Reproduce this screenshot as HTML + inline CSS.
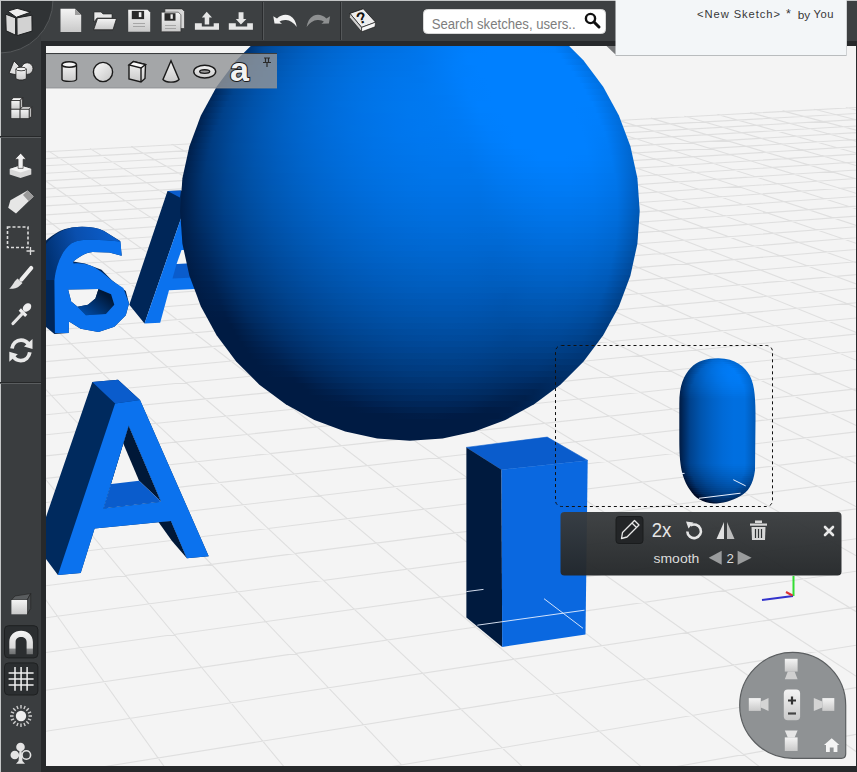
<!DOCTYPE html>
<html><head><meta charset="utf-8">
<style>
*{margin:0;padding:0;box-sizing:border-box}
html,body{width:857px;height:772px;overflow:hidden;background:#27292b;font-family:"Liberation Sans",sans-serif}
svg{position:absolute;left:0;top:0;overflow:visible}
</style></head><body>
<svg width="857" height="772" viewBox="0 0 857 772">
<defs>
<clipPath id="cv"><rect x="46" y="46" width="810" height="720"/></clipPath>
<radialGradient id="sph" gradientUnits="userSpaceOnUse" cx="560" cy="110" r="420" fx="570" fy="100">
<stop offset="0" stop-color="#0a86ff"/>
<stop offset="0.3" stop-color="#0070e6"/>
<stop offset="0.6" stop-color="#0050a8"/>
<stop offset="0.85" stop-color="#002a60"/>
<stop offset="1" stop-color="#00142e"/>
</radialGradient>
<linearGradient id="ico" x1="0" y1="0" x2="0" y2="1">
<stop offset="0" stop-color="#fafafa"/><stop offset="1" stop-color="#cfcfcf"/>
</linearGradient>
</defs>
<!-- frame -->
<rect x="0" y="0" width="857" height="772" fill="#27292b"/>
<rect x="0" y="0" width="857" height="41" fill="#3d4042"/>
<rect x="0" y="0" width="41" height="772" fill="#3a3d3f"/>
<circle cx="0" cy="0" r="53" fill="#303335" stroke="#55585a" stroke-width="1"/>
<rect x="0" y="0" width="857" height="1" fill="#c4c6c7"/>
<rect x="0" y="0" width="1" height="772" fill="#c4c6c7"/>
<rect x="0" y="136" width="41" height="1" fill="#262829"/>
<rect x="0" y="137" width="41" height="1" fill="#5a5d5f"/>
<rect x="0" y="382" width="41" height="1" fill="#262829"/>
<rect x="0" y="383" width="41" height="1" fill="#5a5d5f"/>
<rect x="262" y="2" width="1" height="38" fill="#2a2c2e"/><rect x="263" y="2" width="1" height="38" fill="#55585a"/>
<rect x="340" y="2" width="1" height="38" fill="#2a2c2e"/><rect x="341" y="2" width="1" height="38" fill="#55585a"/>

<!-- canvas -->
<rect x="46" y="46" width="810" height="720" fill="#f4f4f4"/>
<g clip-path="url(#cv)">
<path d="M-1049.0 210.6L-3079.9 2030.2M-990.2 207.4L-2708.2 1939.1M-932.5 204.3L-2366.1 1855.2M-875.7 201.2L-2050.2 1777.8M-819.8 198.2L-1757.6 1706.0M-764.8 195.2L-1485.8 1639.4M-710.8 192.2L-1232.7 1577.4M-657.6 189.3L-996.4 1519.4M-605.2 186.5L-775.3 1465.2M-553.7 183.7L-568.0 1414.4M-503.0 180.9L-373.2 1366.7M-453.1 178.2L-189.8 1321.7M-404.0 175.5L-16.9 1279.3M-355.6 172.9L146.5 1239.3M-308.0 170.3L301.0 1201.4M-261.1 167.7L447.5 1165.5M-214.9 165.2L586.4 1131.4M-169.3 162.7L718.4 1099.1M-124.5 160.3L844.0 1068.3M-80.3 157.9L963.7 1038.9M-36.8 155.5L1077.8 1011.0M6.1 153.2L1186.7 984.3M48.4 150.9L1290.7 958.8M90.1 148.6L1390.3 934.4M131.2 146.4L1485.7 911.0M171.7 144.2L1577.0 888.6M211.7 142.0L1664.7 867.1M251.1 139.9L1748.8 846.5M289.9 137.7L1829.7 826.6M328.2 135.7L1907.5 807.6M366.0 133.6L1982.3 789.2M403.3 131.6L2054.4 771.6M440.1 129.6L2123.8 754.5M476.4 127.6L2190.8 738.1M512.2 125.6L2255.4 722.3M547.5 123.7L2317.8 707.0M582.4 121.8L2378.1 692.2M616.8 119.9L2436.4 677.9M650.8 118.1L2492.8 664.1M684.4 116.3L2547.3 650.7M717.5 114.5L2600.2 637.8M750.2 112.7L2651.4 625.2M782.5 110.9L2701.0 613.1M814.3 109.2L2749.1 601.3M845.8 107.5L2795.8 589.8M876.9 105.8L2841.1 578.7M907.6 104.1L2885.1 567.9M938.0 102.5L2927.8 557.4M967.9 100.8L2969.4 547.3M997.6 99.2L3009.8 537.4M1026.8 97.6L3049.0 527.7M1055.7 96.0L3087.3 518.4M1084.3 94.5L3124.5 509.2M1112.5 93.0L3160.7 500.4M1140.4 91.4L3196.0 491.7M1168.0 89.9L3230.4 483.3M1195.3 88.5L3263.9 475.1M1222.2 87.0L3296.6 467.1M1248.8 85.5L3328.4 459.2M1275.2 84.1L3359.5 451.6M1301.2 82.7L3389.9 444.2M-1050.0 211.5L1303.5 83.1M-1059.7 220.2L1327.2 87.2M-1069.9 229.3L1351.5 91.4M-1080.4 238.8L1376.4 95.7M-1091.4 248.6L1401.9 100.1M-1102.9 258.9L1428.2 104.7M-1114.8 269.6L1455.2 109.3M-1127.3 280.8L1482.9 114.1M-1140.3 292.4L1511.4 119.1M-1154.0 304.7L1540.7 124.1M-1168.2 317.5L1570.9 129.4M-1183.2 330.9L1601.9 134.7M-1198.9 345.0L1633.9 140.3M-1215.4 359.7L1666.8 146.0M-1232.8 375.3L1700.7 151.8M-1251.1 391.7L1735.7 157.9M-1270.4 409.0L1771.8 164.1M-1290.8 427.3L1809.1 170.6M-1312.4 446.6L1847.5 177.2M-1335.3 467.1L1887.3 184.1M-1359.6 488.9L1928.4 191.2M-1385.4 512.1L1970.9 198.6M-1413.0 536.7L2014.9 206.2M-1442.4 563.1L2060.4 214.1M-1473.9 591.3L2107.6 222.3M-1507.7 621.6L2156.5 230.7M-1544.1 654.2L2207.3 239.5M-1583.3 689.3L2260.0 248.6M-1625.8 727.4L2314.8 258.1M-1671.9 768.7L2371.7 268.0M-1722.1 813.7L2431.0 278.2M-1777.0 862.8L2492.7 288.9M-1837.3 916.9L2557.0 300.0M-1903.8 976.5L2624.1 311.6M-1977.5 1042.6L2694.1 323.8M-2059.8 1116.3L2767.4 336.4M-2152.1 1199.0L2844.0 349.7M-2256.4 1292.4L2924.2 363.6M-2375.3 1398.9L3008.3 378.1M-2511.9 1521.3L3096.6 393.4M-2670.6 1663.5L3189.4 409.5M-2857.2 1830.7L3287.0 426.4M-3079.9 2030.2L3389.9 444.2" stroke="#dfdfdf" stroke-width="1.1" fill="none"/>
<defs>
<linearGradient id="capg" gradientUnits="userSpaceOnUse" x1="680" y1="430" x2="756" y2="410">
<stop offset="0" stop-color="#00205a"/><stop offset="0.35" stop-color="#0050b8"/><stop offset="0.8" stop-color="#0a78ee"/><stop offset="1" stop-color="#0a70e0"/>
</linearGradient>
<radialGradient id="capr" gradientUnits="userSpaceOnUse" cx="735" cy="385" r="140">
<stop offset="0" stop-color="#000" stop-opacity="0"/><stop offset="0.6" stop-color="#000" stop-opacity="0.1"/><stop offset="1" stop-color="#000" stop-opacity="0.55"/>
</radialGradient>
<linearGradient id="bowlg" gradientUnits="userSpaceOnUse" x1="100" y1="290" x2="80" y2="315">
<stop offset="0" stop-color="#001838"/><stop offset="1" stop-color="#0050b0"/>
</linearGradient>
</defs>
<!-- б letter -->
<g>
<linearGradient id="bside" gradientUnits="userSpaceOnUse" x1="46" y1="250" x2="110" y2="232"><stop offset="0" stop-color="#003274"/><stop offset="0.5" stop-color="#0a4fae"/><stop offset="1" stop-color="#0a5cc8"/></linearGradient>
<path d="M40 246 C50 236 60 229 72 227.4 C84 226 96 227 104 231 L120.2 241 L121.7 255.7 L109.3 252.6 L92.6 251.9 C86 252.5 80 256 73.2 261.6 L84.9 263.5 L101.5 269.7 L111.6 280 L125.8 291 L129 303.6 L125.8 315.2 L114.3 326.7 L98.5 332 L80.7 328.8 L69 321.5 L68.6 333 L54.4 334 L40 322 Z" fill="#002658"/>
<path d="M46 244 C52 236 60 230 72 227.4 C84 226 96 227 104 231 L120.5 241.5 L106 240.2 L92 239.8 C84 239.8 78 240 71.6 243.3 C62 250 56 265 54.4 280 L46 280 Z" fill="url(#bside)"/>
<path d="M68.1 289.4 L98.5 288.9 L95.4 298.4 L88 304.7 L77.5 306.8 L71.2 301.5 Z" fill="#f4f4f4"/>
<path d="M98.5 288.9 L111.1 294.2 L114.3 304.7 L105.9 314.1 L85.9 315.2 L77.5 306.8 L88 304.7 L95.4 298.4 Z" fill="url(#bowlg)"/>
<path fill-rule="evenodd" fill="#0b72ee" d="M54.4 280 C56 265 62 250 71.6 243.3 C78 240 84 239.8 92 239.8 L106 240.2 L120.5 241.5 L121.7 255.7 L109.3 252.6 L92.6 251.9 C86 252.5 80 256 73.2 261.6 L73.5 263.5 C84 262.5 92 265 101.7 272.1 L113.2 281.6 L123.3 288 L129 303.6 L125.8 315.2 L114.3 326.7 L98.5 332 L80.7 328.8 L69.1 321.5 L68.6 333 L54.9 333 Z
M68.1 289.4 L98.5 288.9 L111.1 294.2 L114.3 304.7 L105.9 314.1 L85.9 315.2 L77.5 306.8 L71.2 301.5 Z"/>
</g>
<!-- small A -->
<g>
<path d="M167.5 190.9 L186 190.4 L186 214 L182.5 214 L144.5 323.4 L129.3 304.8 Z" fill="#002658"/>
<path d="M167.5 190.9 L181 190.4 L179.9 197.6 Z" fill="#0a5ccc"/>
<path d="M182.5 214 L205 214 L205 288.5 L169 290.2 L160.2 322.8 L144.5 323.4 Z" fill="#0b72ee"/>
<path d="M176.6 264 L181.5 250 L200 250 L200 264 Z" fill="#f4f4f4"/>
<path d="M176.6 264 L205 262.5 L205 277 L172.5 278.5 Z" fill="#0a5ccc"/>
</g>
<!-- big A -->
<g>
<path d="M92.3 382.1 L118 379.7 L140 399.9 L208.7 556.2 L186.9 558.2 L171 521 L94.6 528.5 L80.7 573.1 L57.9 575 L40 551 L40 534.4 Z" fill="#002a5e"/>
<clipPath id="ahole"><path d="M128.7 425.6 L161.1 501.7 L103.5 508.6 Z"/></clipPath>
<g clip-path="url(#ahole)">
<path d="M128.7 425.6 L161.1 501.7 L103.5 508.6 Z" fill="#f4f4f4"/>
<path d="M106.7 404.6 L128.7 425.6 L161.1 501.7 L139.1 480.7 Z" fill="#001838"/>
<path d="M81.5 487.6 L139.1 480.7 L161.1 501.7 L103.5 508.6 Z" fill="#0a5ccc"/>
</g>
<path d="M171 521 L186.9 558.2 L172 541 L158.1 521.5 Z" fill="#001838"/>
<path d="M92.3 382.1 L118 379.7 L140 399.9 L115.1 403.5 Z" fill="#0a5ccc"/>
<path fill-rule="evenodd" fill="#0b72ee" d="M115.1 403.5 L140 399.9 L208.7 556.2 L186.9 558.2 L171 521 L94.6 528.5 L80.7 573.1 L57.9 575 Z M128.7 425.6 L161.1 501.7 L103.5 508.6 Z"/>
</g>
<!-- sphere -->
<defs>
<linearGradient id="s0" gradientUnits="userSpaceOnUse" x1="356.3" y1="0" x2="462.7" y2="0"><stop offset="0.000" stop-color="#004591"/><stop offset="0.200" stop-color="#0050a6"/><stop offset="0.400" stop-color="#005ab9"/><stop offset="0.600" stop-color="#0060c4"/><stop offset="0.800" stop-color="#0061c5"/><stop offset="1.000" stop-color="#0061c5"/></linearGradient>
<linearGradient id="s1" gradientUnits="userSpaceOnUse" x1="335.2" y1="0" x2="483.8" y2="0"><stop offset="0.000" stop-color="#003e84"/><stop offset="0.143" stop-color="#004ea2"/><stop offset="0.286" stop-color="#0059b7"/><stop offset="0.429" stop-color="#0061c6"/><stop offset="0.571" stop-color="#0067d0"/><stop offset="0.714" stop-color="#006ad6"/><stop offset="0.857" stop-color="#006ad6"/><stop offset="1.000" stop-color="#0065cd"/></linearGradient>
<linearGradient id="s2" gradientUnits="userSpaceOnUse" x1="319.3" y1="0" x2="499.7" y2="0"><stop offset="0.000" stop-color="#003b7e"/><stop offset="0.125" stop-color="#004da0"/><stop offset="0.250" stop-color="#0058b5"/><stop offset="0.375" stop-color="#0061c6"/><stop offset="0.500" stop-color="#0068d2"/><stop offset="0.625" stop-color="#006ddc"/><stop offset="0.750" stop-color="#0070e1"/><stop offset="0.875" stop-color="#006fe0"/><stop offset="1.000" stop-color="#0068d2"/></linearGradient>
<linearGradient id="s3" gradientUnits="userSpaceOnUse" x1="306.2" y1="0" x2="512.8" y2="0"><stop offset="0.000" stop-color="#00397b"/><stop offset="0.111" stop-color="#004da1"/><stop offset="0.222" stop-color="#0058b4"/><stop offset="0.333" stop-color="#0060c3"/><stop offset="0.444" stop-color="#0068d2"/><stop offset="0.556" stop-color="#006edd"/><stop offset="0.667" stop-color="#0072e5"/><stop offset="0.778" stop-color="#0074e9"/><stop offset="0.889" stop-color="#0073e7"/><stop offset="1.000" stop-color="#0069d5"/></linearGradient>
<linearGradient id="s4" gradientUnits="userSpaceOnUse" x1="294.9" y1="0" x2="524.1" y2="0"><stop offset="0.000" stop-color="#003777"/><stop offset="0.100" stop-color="#004da1"/><stop offset="0.200" stop-color="#0058b5"/><stop offset="0.300" stop-color="#005fc2"/><stop offset="0.400" stop-color="#0066cf"/><stop offset="0.500" stop-color="#006ddb"/><stop offset="0.600" stop-color="#0072e5"/><stop offset="0.700" stop-color="#0076ec"/><stop offset="0.800" stop-color="#0078ef"/><stop offset="0.900" stop-color="#0076ec"/><stop offset="1.000" stop-color="#006bd8"/></linearGradient>
<linearGradient id="s5" gradientUnits="userSpaceOnUse" x1="285.0" y1="0" x2="534.0" y2="0"><stop offset="0.000" stop-color="#003574"/><stop offset="0.091" stop-color="#004da0"/><stop offset="0.182" stop-color="#0058b5"/><stop offset="0.273" stop-color="#0060c3"/><stop offset="0.364" stop-color="#0065cc"/><stop offset="0.455" stop-color="#006bd9"/><stop offset="0.545" stop-color="#0071e4"/><stop offset="0.636" stop-color="#0076ec"/><stop offset="0.727" stop-color="#0079f2"/><stop offset="0.818" stop-color="#007af4"/><stop offset="0.909" stop-color="#0078f0"/><stop offset="1.000" stop-color="#006cda"/></linearGradient>
<linearGradient id="s6" gradientUnits="userSpaceOnUse" x1="276.0" y1="0" x2="543.0" y2="0"><stop offset="0.000" stop-color="#003371"/><stop offset="0.083" stop-color="#004c9f"/><stop offset="0.167" stop-color="#0058b5"/><stop offset="0.250" stop-color="#0060c3"/><stop offset="0.333" stop-color="#0065cd"/><stop offset="0.417" stop-color="#0069d5"/><stop offset="0.500" stop-color="#0070e1"/><stop offset="0.583" stop-color="#0075eb"/><stop offset="0.667" stop-color="#0079f2"/><stop offset="0.750" stop-color="#007cf7"/><stop offset="0.833" stop-color="#007df9"/><stop offset="0.917" stop-color="#007af4"/><stop offset="1.000" stop-color="#006ddc"/></linearGradient>
<linearGradient id="s7" gradientUnits="userSpaceOnUse" x1="267.9" y1="0" x2="551.1" y2="0"><stop offset="0.000" stop-color="#00326e"/><stop offset="0.083" stop-color="#004c9f"/><stop offset="0.167" stop-color="#0059b6"/><stop offset="0.250" stop-color="#0061c6"/><stop offset="0.333" stop-color="#0067d0"/><stop offset="0.417" stop-color="#006bd7"/><stop offset="0.500" stop-color="#0071e3"/><stop offset="0.583" stop-color="#0076ed"/><stop offset="0.667" stop-color="#007bf5"/><stop offset="0.750" stop-color="#007efa"/><stop offset="0.833" stop-color="#007ffc"/><stop offset="0.917" stop-color="#007cf7"/><stop offset="1.000" stop-color="#006edd"/></linearGradient>
<linearGradient id="s8" gradientUnits="userSpaceOnUse" x1="260.4" y1="0" x2="558.6" y2="0"><stop offset="0.000" stop-color="#00306b"/><stop offset="0.077" stop-color="#004b9d"/><stop offset="0.154" stop-color="#0058b5"/><stop offset="0.231" stop-color="#0061c5"/><stop offset="0.308" stop-color="#0067d0"/><stop offset="0.385" stop-color="#006bd8"/><stop offset="0.462" stop-color="#006fdf"/><stop offset="0.538" stop-color="#0075ea"/><stop offset="0.615" stop-color="#007af3"/><stop offset="0.692" stop-color="#007dfa"/><stop offset="0.769" stop-color="#0080fe"/><stop offset="0.846" stop-color="#0080ff"/><stop offset="0.923" stop-color="#007df9"/><stop offset="1.000" stop-color="#006ede"/></linearGradient>
<linearGradient id="s9" gradientUnits="userSpaceOnUse" x1="253.6" y1="0" x2="565.4" y2="0"><stop offset="0.000" stop-color="#002f68"/><stop offset="0.077" stop-color="#004b9e"/><stop offset="0.154" stop-color="#0059b6"/><stop offset="0.231" stop-color="#0061c6"/><stop offset="0.308" stop-color="#0068d2"/><stop offset="0.385" stop-color="#006cda"/><stop offset="0.462" stop-color="#006fe0"/><stop offset="0.538" stop-color="#0075eb"/><stop offset="0.615" stop-color="#007bf5"/><stop offset="0.692" stop-color="#007efc"/><stop offset="0.769" stop-color="#0080ff"/><stop offset="0.846" stop-color="#0080ff"/><stop offset="0.923" stop-color="#007efc"/><stop offset="1.000" stop-color="#006ede"/></linearGradient>
<linearGradient id="s10" gradientUnits="userSpaceOnUse" x1="247.2" y1="0" x2="571.8" y2="0"><stop offset="0.000" stop-color="#002d66"/><stop offset="0.071" stop-color="#004a9b"/><stop offset="0.143" stop-color="#0057b4"/><stop offset="0.214" stop-color="#0060c4"/><stop offset="0.286" stop-color="#0067d1"/><stop offset="0.357" stop-color="#006cda"/><stop offset="0.429" stop-color="#0070e0"/><stop offset="0.500" stop-color="#0073e6"/><stop offset="0.571" stop-color="#0078f1"/><stop offset="0.643" stop-color="#007df9"/><stop offset="0.714" stop-color="#0080ff"/><stop offset="0.786" stop-color="#0080ff"/><stop offset="0.857" stop-color="#0080ff"/><stop offset="0.929" stop-color="#007ffd"/><stop offset="1.000" stop-color="#006fdf"/></linearGradient>
<linearGradient id="s11" gradientUnits="userSpaceOnUse" x1="241.4" y1="0" x2="577.6" y2="0"><stop offset="0.000" stop-color="#002c63"/><stop offset="0.067" stop-color="#004999"/><stop offset="0.133" stop-color="#0056b1"/><stop offset="0.200" stop-color="#005fc3"/><stop offset="0.267" stop-color="#0066cf"/><stop offset="0.333" stop-color="#006bd9"/><stop offset="0.400" stop-color="#006fe0"/><stop offset="0.467" stop-color="#0072e5"/><stop offset="0.533" stop-color="#0076ec"/><stop offset="0.600" stop-color="#007bf5"/><stop offset="0.667" stop-color="#007ffd"/><stop offset="0.733" stop-color="#0080ff"/><stop offset="0.800" stop-color="#0080ff"/><stop offset="0.867" stop-color="#0080ff"/><stop offset="0.933" stop-color="#007ffd"/><stop offset="1.000" stop-color="#006fdf"/></linearGradient>
<linearGradient id="s12" gradientUnits="userSpaceOnUse" x1="235.9" y1="0" x2="583.1" y2="0"><stop offset="0.000" stop-color="#002a60"/><stop offset="0.067" stop-color="#004998"/><stop offset="0.133" stop-color="#0056b2"/><stop offset="0.200" stop-color="#0060c3"/><stop offset="0.267" stop-color="#0067d0"/><stop offset="0.333" stop-color="#006cda"/><stop offset="0.400" stop-color="#0070e2"/><stop offset="0.467" stop-color="#0073e7"/><stop offset="0.533" stop-color="#0076ed"/><stop offset="0.600" stop-color="#007bf6"/><stop offset="0.667" stop-color="#0080fe"/><stop offset="0.733" stop-color="#0080ff"/><stop offset="0.800" stop-color="#0080ff"/><stop offset="0.867" stop-color="#0080ff"/><stop offset="0.933" stop-color="#0080ff"/><stop offset="1.000" stop-color="#006fdf"/></linearGradient>
<linearGradient id="s13" gradientUnits="userSpaceOnUse" x1="230.8" y1="0" x2="588.2" y2="0"><stop offset="0.000" stop-color="#00295e"/><stop offset="0.067" stop-color="#004898"/><stop offset="0.133" stop-color="#0056b2"/><stop offset="0.200" stop-color="#0060c4"/><stop offset="0.267" stop-color="#0067d1"/><stop offset="0.333" stop-color="#006ddb"/><stop offset="0.400" stop-color="#0071e3"/><stop offset="0.467" stop-color="#0074e8"/><stop offset="0.533" stop-color="#0076ed"/><stop offset="0.600" stop-color="#007cf7"/><stop offset="0.667" stop-color="#0080ff"/><stop offset="0.733" stop-color="#0080ff"/><stop offset="0.800" stop-color="#0080ff"/><stop offset="0.867" stop-color="#0080ff"/><stop offset="0.933" stop-color="#0080ff"/><stop offset="1.000" stop-color="#006ede"/></linearGradient>
<linearGradient id="s14" gradientUnits="userSpaceOnUse" x1="226.0" y1="0" x2="593.0" y2="0"><stop offset="0.000" stop-color="#00275b"/><stop offset="0.062" stop-color="#004795"/><stop offset="0.125" stop-color="#0055af"/><stop offset="0.188" stop-color="#005fc1"/><stop offset="0.250" stop-color="#0066cf"/><stop offset="0.312" stop-color="#006cd9"/><stop offset="0.375" stop-color="#0070e1"/><stop offset="0.438" stop-color="#0073e7"/><stop offset="0.500" stop-color="#0075eb"/><stop offset="0.562" stop-color="#0079f2"/><stop offset="0.625" stop-color="#007efb"/><stop offset="0.688" stop-color="#0080ff"/><stop offset="0.750" stop-color="#0080ff"/><stop offset="0.812" stop-color="#0080ff"/><stop offset="0.875" stop-color="#0080ff"/><stop offset="0.938" stop-color="#0080ff"/><stop offset="1.000" stop-color="#006ede"/></linearGradient>
<linearGradient id="s15" gradientUnits="userSpaceOnUse" x1="221.6" y1="0" x2="597.4" y2="0"><stop offset="0.000" stop-color="#002658"/><stop offset="0.062" stop-color="#004694"/><stop offset="0.125" stop-color="#0055af"/><stop offset="0.188" stop-color="#005fc1"/><stop offset="0.250" stop-color="#0066cf"/><stop offset="0.312" stop-color="#006cda"/><stop offset="0.375" stop-color="#0071e2"/><stop offset="0.438" stop-color="#0074e8"/><stop offset="0.500" stop-color="#0076ec"/><stop offset="0.562" stop-color="#0079f2"/><stop offset="0.625" stop-color="#007efb"/><stop offset="0.688" stop-color="#0080ff"/><stop offset="0.750" stop-color="#0080ff"/><stop offset="0.812" stop-color="#0080ff"/><stop offset="0.875" stop-color="#0080ff"/><stop offset="0.938" stop-color="#0080ff"/><stop offset="1.000" stop-color="#006edd"/></linearGradient>
<linearGradient id="s16" gradientUnits="userSpaceOnUse" x1="217.4" y1="0" x2="601.6" y2="0"><stop offset="0.000" stop-color="#002556"/><stop offset="0.059" stop-color="#004591"/><stop offset="0.118" stop-color="#0053ac"/><stop offset="0.176" stop-color="#005dbe"/><stop offset="0.235" stop-color="#0065cd"/><stop offset="0.294" stop-color="#006bd8"/><stop offset="0.353" stop-color="#0070e0"/><stop offset="0.412" stop-color="#0073e7"/><stop offset="0.471" stop-color="#0076ec"/><stop offset="0.529" stop-color="#0077ee"/><stop offset="0.588" stop-color="#007bf6"/><stop offset="0.647" stop-color="#007ffe"/><stop offset="0.706" stop-color="#0080ff"/><stop offset="0.765" stop-color="#0080ff"/><stop offset="0.824" stop-color="#0080ff"/><stop offset="0.882" stop-color="#0080ff"/><stop offset="0.941" stop-color="#0080ff"/><stop offset="1.000" stop-color="#006edd"/></linearGradient>
<linearGradient id="s17" gradientUnits="userSpaceOnUse" x1="213.5" y1="0" x2="605.5" y2="0"><stop offset="0.000" stop-color="#002354"/><stop offset="0.059" stop-color="#004490"/><stop offset="0.118" stop-color="#0053ab"/><stop offset="0.176" stop-color="#005dbe"/><stop offset="0.235" stop-color="#0065cd"/><stop offset="0.294" stop-color="#006bd8"/><stop offset="0.353" stop-color="#0070e1"/><stop offset="0.412" stop-color="#0073e8"/><stop offset="0.471" stop-color="#0076ec"/><stop offset="0.529" stop-color="#0078ef"/><stop offset="0.588" stop-color="#007bf5"/><stop offset="0.647" stop-color="#007ffe"/><stop offset="0.706" stop-color="#0080ff"/><stop offset="0.765" stop-color="#0080ff"/><stop offset="0.824" stop-color="#0080ff"/><stop offset="0.882" stop-color="#0080ff"/><stop offset="0.941" stop-color="#0080ff"/><stop offset="1.000" stop-color="#006ddc"/></linearGradient>
<linearGradient id="s18" gradientUnits="userSpaceOnUse" x1="209.9" y1="0" x2="609.1" y2="0"><stop offset="0.000" stop-color="#002251"/><stop offset="0.059" stop-color="#00448f"/><stop offset="0.118" stop-color="#0052ab"/><stop offset="0.176" stop-color="#005dbe"/><stop offset="0.235" stop-color="#0065cd"/><stop offset="0.294" stop-color="#006bd8"/><stop offset="0.353" stop-color="#0070e1"/><stop offset="0.412" stop-color="#0074e8"/><stop offset="0.471" stop-color="#0076ed"/><stop offset="0.529" stop-color="#0078f0"/><stop offset="0.588" stop-color="#007bf5"/><stop offset="0.647" stop-color="#007ffd"/><stop offset="0.706" stop-color="#0080ff"/><stop offset="0.765" stop-color="#0080ff"/><stop offset="0.824" stop-color="#0080ff"/><stop offset="0.882" stop-color="#0080ff"/><stop offset="0.941" stop-color="#0080ff"/><stop offset="1.000" stop-color="#006ddb"/></linearGradient>
<linearGradient id="s19" gradientUnits="userSpaceOnUse" x1="206.5" y1="0" x2="612.5" y2="0"><stop offset="0.000" stop-color="#00214f"/><stop offset="0.059" stop-color="#00438e"/><stop offset="0.118" stop-color="#0052aa"/><stop offset="0.176" stop-color="#005dbd"/><stop offset="0.235" stop-color="#0065cc"/><stop offset="0.294" stop-color="#006bd8"/><stop offset="0.353" stop-color="#0070e1"/><stop offset="0.412" stop-color="#0074e8"/><stop offset="0.471" stop-color="#0076ed"/><stop offset="0.529" stop-color="#0078f0"/><stop offset="0.588" stop-color="#007af4"/><stop offset="0.647" stop-color="#007ffd"/><stop offset="0.706" stop-color="#0080ff"/><stop offset="0.765" stop-color="#0080ff"/><stop offset="0.824" stop-color="#0080ff"/><stop offset="0.882" stop-color="#0080ff"/><stop offset="0.941" stop-color="#0080ff"/><stop offset="1.000" stop-color="#006cda"/></linearGradient>
<linearGradient id="s20" gradientUnits="userSpaceOnUse" x1="203.4" y1="0" x2="615.6" y2="0"><stop offset="0.000" stop-color="#00204c"/><stop offset="0.056" stop-color="#00418b"/><stop offset="0.111" stop-color="#0050a6"/><stop offset="0.167" stop-color="#005bba"/><stop offset="0.222" stop-color="#0063c9"/><stop offset="0.278" stop-color="#0069d5"/><stop offset="0.333" stop-color="#006fdf"/><stop offset="0.389" stop-color="#0073e6"/><stop offset="0.444" stop-color="#0076eb"/><stop offset="0.500" stop-color="#0078ef"/><stop offset="0.556" stop-color="#0079f1"/><stop offset="0.611" stop-color="#007cf7"/><stop offset="0.667" stop-color="#0080ff"/><stop offset="0.722" stop-color="#0080ff"/><stop offset="0.778" stop-color="#0080ff"/><stop offset="0.833" stop-color="#0080ff"/><stop offset="0.889" stop-color="#0080ff"/><stop offset="0.944" stop-color="#0080fe"/><stop offset="1.000" stop-color="#006bd9"/></linearGradient>
<linearGradient id="s21" gradientUnits="userSpaceOnUse" x1="200.4" y1="0" x2="618.6" y2="0"><stop offset="0.000" stop-color="#001e4a"/><stop offset="0.056" stop-color="#00418a"/><stop offset="0.111" stop-color="#0050a6"/><stop offset="0.167" stop-color="#005ab9"/><stop offset="0.222" stop-color="#0063c9"/><stop offset="0.278" stop-color="#0069d5"/><stop offset="0.333" stop-color="#006ede"/><stop offset="0.389" stop-color="#0073e6"/><stop offset="0.444" stop-color="#0076eb"/><stop offset="0.500" stop-color="#0078ef"/><stop offset="0.556" stop-color="#0079f1"/><stop offset="0.611" stop-color="#007bf6"/><stop offset="0.667" stop-color="#0080fe"/><stop offset="0.722" stop-color="#0080ff"/><stop offset="0.778" stop-color="#0080ff"/><stop offset="0.833" stop-color="#0080ff"/><stop offset="0.889" stop-color="#0080ff"/><stop offset="0.944" stop-color="#007ffd"/><stop offset="1.000" stop-color="#006bd7"/></linearGradient>
<linearGradient id="s22" gradientUnits="userSpaceOnUse" x1="197.7" y1="0" x2="621.3" y2="0"><stop offset="0.000" stop-color="#001d48"/><stop offset="0.056" stop-color="#004088"/><stop offset="0.111" stop-color="#004fa5"/><stop offset="0.167" stop-color="#005ab9"/><stop offset="0.222" stop-color="#0062c8"/><stop offset="0.278" stop-color="#0069d4"/><stop offset="0.333" stop-color="#006ede"/><stop offset="0.389" stop-color="#0072e6"/><stop offset="0.444" stop-color="#0075eb"/><stop offset="0.500" stop-color="#0078ef"/><stop offset="0.556" stop-color="#0079f1"/><stop offset="0.611" stop-color="#007bf6"/><stop offset="0.667" stop-color="#007ffd"/><stop offset="0.722" stop-color="#0080ff"/><stop offset="0.778" stop-color="#0080ff"/><stop offset="0.833" stop-color="#0080ff"/><stop offset="0.889" stop-color="#0080ff"/><stop offset="0.944" stop-color="#007ffd"/><stop offset="1.000" stop-color="#006ad6"/></linearGradient>
<linearGradient id="s23" gradientUnits="userSpaceOnUse" x1="195.2" y1="0" x2="623.8" y2="0"><stop offset="0.000" stop-color="#001c45"/><stop offset="0.056" stop-color="#003f87"/><stop offset="0.111" stop-color="#004fa4"/><stop offset="0.167" stop-color="#005ab8"/><stop offset="0.222" stop-color="#0062c7"/><stop offset="0.278" stop-color="#0069d4"/><stop offset="0.333" stop-color="#006ede"/><stop offset="0.389" stop-color="#0072e5"/><stop offset="0.444" stop-color="#0075eb"/><stop offset="0.500" stop-color="#0077ef"/><stop offset="0.556" stop-color="#0079f1"/><stop offset="0.611" stop-color="#007af4"/><stop offset="0.667" stop-color="#007ffc"/><stop offset="0.722" stop-color="#0080ff"/><stop offset="0.778" stop-color="#0080ff"/><stop offset="0.833" stop-color="#0080ff"/><stop offset="0.889" stop-color="#0080ff"/><stop offset="0.944" stop-color="#007efc"/><stop offset="1.000" stop-color="#0069d4"/></linearGradient>
<linearGradient id="s24" gradientUnits="userSpaceOnUse" x1="192.9" y1="0" x2="626.1" y2="0"><stop offset="0.000" stop-color="#001b43"/><stop offset="0.053" stop-color="#003d84"/><stop offset="0.105" stop-color="#004da0"/><stop offset="0.158" stop-color="#0058b4"/><stop offset="0.211" stop-color="#0060c4"/><stop offset="0.263" stop-color="#0067d0"/><stop offset="0.316" stop-color="#006cda"/><stop offset="0.368" stop-color="#0071e2"/><stop offset="0.421" stop-color="#0074e8"/><stop offset="0.474" stop-color="#0076ed"/><stop offset="0.526" stop-color="#0078f0"/><stop offset="0.579" stop-color="#0079f1"/><stop offset="0.632" stop-color="#007bf6"/><stop offset="0.684" stop-color="#007ffd"/><stop offset="0.737" stop-color="#0080ff"/><stop offset="0.789" stop-color="#0080ff"/><stop offset="0.842" stop-color="#0080ff"/><stop offset="0.895" stop-color="#0080ff"/><stop offset="0.947" stop-color="#007dfa"/><stop offset="1.000" stop-color="#0068d3"/></linearGradient>
<linearGradient id="s25" gradientUnits="userSpaceOnUse" x1="190.7" y1="0" x2="628.3" y2="0"><stop offset="0.000" stop-color="#001b43"/><stop offset="0.053" stop-color="#003d82"/><stop offset="0.105" stop-color="#004c9f"/><stop offset="0.158" stop-color="#0057b3"/><stop offset="0.211" stop-color="#0060c3"/><stop offset="0.263" stop-color="#0066cf"/><stop offset="0.316" stop-color="#006cda"/><stop offset="0.368" stop-color="#0070e2"/><stop offset="0.421" stop-color="#0074e8"/><stop offset="0.474" stop-color="#0076ed"/><stop offset="0.526" stop-color="#0078ef"/><stop offset="0.579" stop-color="#0078f1"/><stop offset="0.632" stop-color="#007bf5"/><stop offset="0.684" stop-color="#007efc"/><stop offset="0.737" stop-color="#0080ff"/><stop offset="0.789" stop-color="#0080ff"/><stop offset="0.842" stop-color="#0080ff"/><stop offset="0.895" stop-color="#0080ff"/><stop offset="0.947" stop-color="#007df9"/><stop offset="1.000" stop-color="#0067d1"/></linearGradient>
<linearGradient id="s26" gradientUnits="userSpaceOnUse" x1="188.8" y1="0" x2="630.2" y2="0"><stop offset="0.000" stop-color="#001b43"/><stop offset="0.053" stop-color="#003c81"/><stop offset="0.105" stop-color="#004b9d"/><stop offset="0.158" stop-color="#0056b2"/><stop offset="0.211" stop-color="#005fc2"/><stop offset="0.263" stop-color="#0066cf"/><stop offset="0.316" stop-color="#006bd9"/><stop offset="0.368" stop-color="#0070e1"/><stop offset="0.421" stop-color="#0073e7"/><stop offset="0.474" stop-color="#0076ec"/><stop offset="0.526" stop-color="#0077ef"/><stop offset="0.579" stop-color="#0078f0"/><stop offset="0.632" stop-color="#007af4"/><stop offset="0.684" stop-color="#007efb"/><stop offset="0.737" stop-color="#0080ff"/><stop offset="0.789" stop-color="#0080ff"/><stop offset="0.842" stop-color="#0080ff"/><stop offset="0.895" stop-color="#0080ff"/><stop offset="0.947" stop-color="#007cf7"/><stop offset="1.000" stop-color="#0066cf"/></linearGradient>
<linearGradient id="s27" gradientUnits="userSpaceOnUse" x1="187.0" y1="0" x2="632.0" y2="0"><stop offset="0.000" stop-color="#001b43"/><stop offset="0.053" stop-color="#003b7f"/><stop offset="0.105" stop-color="#004b9c"/><stop offset="0.158" stop-color="#0056b1"/><stop offset="0.211" stop-color="#005ec1"/><stop offset="0.263" stop-color="#0065ce"/><stop offset="0.316" stop-color="#006bd8"/><stop offset="0.368" stop-color="#006fe0"/><stop offset="0.421" stop-color="#0073e7"/><stop offset="0.474" stop-color="#0075eb"/><stop offset="0.526" stop-color="#0077ee"/><stop offset="0.579" stop-color="#0078ef"/><stop offset="0.632" stop-color="#0079f2"/><stop offset="0.684" stop-color="#007df9"/><stop offset="0.737" stop-color="#0080ff"/><stop offset="0.789" stop-color="#0080ff"/><stop offset="0.842" stop-color="#0080ff"/><stop offset="0.895" stop-color="#0080ff"/><stop offset="0.947" stop-color="#007bf6"/><stop offset="1.000" stop-color="#0065cd"/></linearGradient>
<linearGradient id="s28" gradientUnits="userSpaceOnUse" x1="185.4" y1="0" x2="633.6" y2="0"><stop offset="0.000" stop-color="#001b43"/><stop offset="0.053" stop-color="#003a7e"/><stop offset="0.105" stop-color="#004a9b"/><stop offset="0.158" stop-color="#0055af"/><stop offset="0.211" stop-color="#005ec0"/><stop offset="0.263" stop-color="#0065cc"/><stop offset="0.316" stop-color="#006ad7"/><stop offset="0.368" stop-color="#006fdf"/><stop offset="0.421" stop-color="#0072e6"/><stop offset="0.474" stop-color="#0075ea"/><stop offset="0.526" stop-color="#0077ed"/><stop offset="0.579" stop-color="#0077ef"/><stop offset="0.632" stop-color="#0078f0"/><stop offset="0.684" stop-color="#007cf8"/><stop offset="0.737" stop-color="#007ffd"/><stop offset="0.789" stop-color="#0080ff"/><stop offset="0.842" stop-color="#0080ff"/><stop offset="0.895" stop-color="#0080fe"/><stop offset="0.947" stop-color="#007af4"/><stop offset="1.000" stop-color="#0064cb"/></linearGradient>
<linearGradient id="s29" gradientUnits="userSpaceOnUse" x1="184.0" y1="0" x2="635.0" y2="0"><stop offset="0.000" stop-color="#001b43"/><stop offset="0.053" stop-color="#00397c"/><stop offset="0.105" stop-color="#004999"/><stop offset="0.158" stop-color="#0054ae"/><stop offset="0.211" stop-color="#005dbe"/><stop offset="0.263" stop-color="#0064cb"/><stop offset="0.316" stop-color="#006ad6"/><stop offset="0.368" stop-color="#006ede"/><stop offset="0.421" stop-color="#0072e5"/><stop offset="0.474" stop-color="#0074e9"/><stop offset="0.526" stop-color="#0076ec"/><stop offset="0.579" stop-color="#0077ee"/><stop offset="0.632" stop-color="#0077ef"/><stop offset="0.684" stop-color="#007bf6"/><stop offset="0.737" stop-color="#007efb"/><stop offset="0.789" stop-color="#0080ff"/><stop offset="0.842" stop-color="#0080ff"/><stop offset="0.895" stop-color="#007ffd"/><stop offset="0.947" stop-color="#007af3"/><stop offset="1.000" stop-color="#0063c9"/></linearGradient>
<linearGradient id="s30" gradientUnits="userSpaceOnUse" x1="182.7" y1="0" x2="636.3" y2="0"><stop offset="0.000" stop-color="#001b43"/><stop offset="0.053" stop-color="#00397b"/><stop offset="0.105" stop-color="#004898"/><stop offset="0.158" stop-color="#0054ad"/><stop offset="0.211" stop-color="#005cbd"/><stop offset="0.263" stop-color="#0064ca"/><stop offset="0.316" stop-color="#0069d5"/><stop offset="0.368" stop-color="#006edd"/><stop offset="0.421" stop-color="#0071e4"/><stop offset="0.474" stop-color="#0074e8"/><stop offset="0.526" stop-color="#0075eb"/><stop offset="0.579" stop-color="#0076ed"/><stop offset="0.632" stop-color="#0076ed"/><stop offset="0.684" stop-color="#007af4"/><stop offset="0.737" stop-color="#007dfa"/><stop offset="0.789" stop-color="#007ffd"/><stop offset="0.842" stop-color="#007ffe"/><stop offset="0.895" stop-color="#007efb"/><stop offset="0.947" stop-color="#0079f1"/><stop offset="1.000" stop-color="#0062c7"/></linearGradient>
<linearGradient id="s31" gradientUnits="userSpaceOnUse" x1="181.7" y1="0" x2="637.3" y2="0"><stop offset="0.000" stop-color="#001b43"/><stop offset="0.053" stop-color="#003879"/><stop offset="0.105" stop-color="#004896"/><stop offset="0.158" stop-color="#0053ab"/><stop offset="0.211" stop-color="#005cbc"/><stop offset="0.263" stop-color="#0063c9"/><stop offset="0.316" stop-color="#0069d3"/><stop offset="0.368" stop-color="#006ddc"/><stop offset="0.421" stop-color="#0071e2"/><stop offset="0.474" stop-color="#0073e7"/><stop offset="0.526" stop-color="#0075ea"/><stop offset="0.579" stop-color="#0075eb"/><stop offset="0.632" stop-color="#0075eb"/><stop offset="0.684" stop-color="#0079f2"/><stop offset="0.737" stop-color="#007cf8"/><stop offset="0.789" stop-color="#007efb"/><stop offset="0.842" stop-color="#007efc"/><stop offset="0.895" stop-color="#007df9"/><stop offset="0.947" stop-color="#0078ef"/><stop offset="1.000" stop-color="#0061c5"/></linearGradient>
<linearGradient id="s32" gradientUnits="userSpaceOnUse" x1="180.7" y1="0" x2="638.3" y2="0"><stop offset="0.000" stop-color="#001b43"/><stop offset="0.050" stop-color="#003675"/><stop offset="0.100" stop-color="#004592"/><stop offset="0.150" stop-color="#0051a7"/><stop offset="0.200" stop-color="#0059b7"/><stop offset="0.250" stop-color="#0060c4"/><stop offset="0.300" stop-color="#0066cf"/><stop offset="0.350" stop-color="#006bd8"/><stop offset="0.400" stop-color="#006fdf"/><stop offset="0.450" stop-color="#0071e4"/><stop offset="0.500" stop-color="#0073e7"/><stop offset="0.550" stop-color="#0075ea"/><stop offset="0.600" stop-color="#0075ea"/><stop offset="0.650" stop-color="#0076eb"/><stop offset="0.700" stop-color="#0079f2"/><stop offset="0.750" stop-color="#007cf7"/><stop offset="0.800" stop-color="#007df9"/><stop offset="0.850" stop-color="#007dfa"/><stop offset="0.900" stop-color="#007bf6"/><stop offset="0.950" stop-color="#0076ec"/><stop offset="1.000" stop-color="#005fc3"/></linearGradient>
<linearGradient id="s33" gradientUnits="userSpaceOnUse" x1="180.0" y1="0" x2="639.0" y2="0"><stop offset="0.000" stop-color="#001b43"/><stop offset="0.050" stop-color="#003574"/><stop offset="0.100" stop-color="#004491"/><stop offset="0.150" stop-color="#0050a5"/><stop offset="0.200" stop-color="#0058b6"/><stop offset="0.250" stop-color="#0060c3"/><stop offset="0.300" stop-color="#0065ce"/><stop offset="0.350" stop-color="#006ad6"/><stop offset="0.400" stop-color="#006edd"/><stop offset="0.450" stop-color="#0071e2"/><stop offset="0.500" stop-color="#0073e6"/><stop offset="0.550" stop-color="#0074e8"/><stop offset="0.600" stop-color="#0074e9"/><stop offset="0.650" stop-color="#0074e9"/><stop offset="0.700" stop-color="#0078f0"/><stop offset="0.750" stop-color="#007af4"/><stop offset="0.800" stop-color="#007cf7"/><stop offset="0.850" stop-color="#007cf8"/><stop offset="0.900" stop-color="#007af4"/><stop offset="0.950" stop-color="#0075ea"/><stop offset="1.000" stop-color="#005ec0"/></linearGradient>
<linearGradient id="s34" gradientUnits="userSpaceOnUse" x1="179.4" y1="0" x2="639.6" y2="0"><stop offset="0.000" stop-color="#001b43"/><stop offset="0.050" stop-color="#003472"/><stop offset="0.100" stop-color="#00448f"/><stop offset="0.150" stop-color="#004fa4"/><stop offset="0.200" stop-color="#0058b4"/><stop offset="0.250" stop-color="#005fc1"/><stop offset="0.300" stop-color="#0065cc"/><stop offset="0.350" stop-color="#0069d5"/><stop offset="0.400" stop-color="#006ddc"/><stop offset="0.450" stop-color="#0070e1"/><stop offset="0.500" stop-color="#0072e5"/><stop offset="0.550" stop-color="#0073e7"/><stop offset="0.600" stop-color="#0073e7"/><stop offset="0.650" stop-color="#0073e7"/><stop offset="0.700" stop-color="#0077ed"/><stop offset="0.750" stop-color="#0079f2"/><stop offset="0.800" stop-color="#007bf5"/><stop offset="0.850" stop-color="#007bf5"/><stop offset="0.900" stop-color="#0079f2"/><stop offset="0.950" stop-color="#0074e8"/><stop offset="1.000" stop-color="#005dbe"/></linearGradient>
<linearGradient id="s35" gradientUnits="userSpaceOnUse" x1="178.9" y1="0" x2="640.1" y2="0"><stop offset="0.000" stop-color="#001b43"/><stop offset="0.050" stop-color="#003370"/><stop offset="0.100" stop-color="#00438d"/><stop offset="0.150" stop-color="#004ea2"/><stop offset="0.200" stop-color="#0057b2"/><stop offset="0.250" stop-color="#005ec0"/><stop offset="0.300" stop-color="#0064ca"/><stop offset="0.350" stop-color="#0068d3"/><stop offset="0.400" stop-color="#006cda"/><stop offset="0.450" stop-color="#006fdf"/><stop offset="0.500" stop-color="#0071e3"/><stop offset="0.550" stop-color="#0072e5"/><stop offset="0.600" stop-color="#0072e6"/><stop offset="0.650" stop-color="#0072e5"/><stop offset="0.700" stop-color="#0075eb"/><stop offset="0.750" stop-color="#0078f0"/><stop offset="0.800" stop-color="#0079f3"/><stop offset="0.850" stop-color="#007af3"/><stop offset="0.900" stop-color="#0078f0"/><stop offset="0.950" stop-color="#0072e6"/><stop offset="1.000" stop-color="#005bbb"/></linearGradient>
<linearGradient id="s36" gradientUnits="userSpaceOnUse" x1="178.6" y1="0" x2="640.4" y2="0"><stop offset="0.000" stop-color="#001b43"/><stop offset="0.050" stop-color="#00326e"/><stop offset="0.100" stop-color="#00428b"/><stop offset="0.150" stop-color="#004da0"/><stop offset="0.200" stop-color="#0056b1"/><stop offset="0.250" stop-color="#005dbe"/><stop offset="0.300" stop-color="#0063c9"/><stop offset="0.350" stop-color="#0067d1"/><stop offset="0.400" stop-color="#006bd8"/><stop offset="0.450" stop-color="#006ede"/><stop offset="0.500" stop-color="#0070e1"/><stop offset="0.550" stop-color="#0071e3"/><stop offset="0.600" stop-color="#0071e4"/><stop offset="0.650" stop-color="#0071e3"/><stop offset="0.700" stop-color="#0074e9"/><stop offset="0.750" stop-color="#0077ed"/><stop offset="0.800" stop-color="#0078f0"/><stop offset="0.850" stop-color="#0078f0"/><stop offset="0.900" stop-color="#0076ed"/><stop offset="0.950" stop-color="#0071e3"/><stop offset="1.000" stop-color="#005ab9"/></linearGradient>
<linearGradient id="s37" gradientUnits="userSpaceOnUse" x1="178.5" y1="0" x2="640.5" y2="0"><stop offset="0.000" stop-color="#001b43"/><stop offset="0.050" stop-color="#00316d"/><stop offset="0.100" stop-color="#00418a"/><stop offset="0.150" stop-color="#004c9e"/><stop offset="0.200" stop-color="#0055af"/><stop offset="0.250" stop-color="#005cbc"/><stop offset="0.300" stop-color="#0062c7"/><stop offset="0.350" stop-color="#0066cf"/><stop offset="0.400" stop-color="#006ad6"/><stop offset="0.450" stop-color="#006ddc"/><stop offset="0.500" stop-color="#006fdf"/><stop offset="0.550" stop-color="#0070e2"/><stop offset="0.600" stop-color="#0070e2"/><stop offset="0.650" stop-color="#0070e1"/><stop offset="0.700" stop-color="#0073e6"/><stop offset="0.750" stop-color="#0075eb"/><stop offset="0.800" stop-color="#0077ee"/><stop offset="0.850" stop-color="#0077ee"/><stop offset="0.900" stop-color="#0075ea"/><stop offset="0.950" stop-color="#0070e1"/><stop offset="1.000" stop-color="#0059b6"/></linearGradient>
<linearGradient id="s38" gradientUnits="userSpaceOnUse" x1="178.5" y1="0" x2="640.5" y2="0"><stop offset="0.000" stop-color="#001b43"/><stop offset="0.050" stop-color="#00306b"/><stop offset="0.100" stop-color="#004088"/><stop offset="0.150" stop-color="#004b9c"/><stop offset="0.200" stop-color="#0054ad"/><stop offset="0.250" stop-color="#005bba"/><stop offset="0.300" stop-color="#0061c5"/><stop offset="0.350" stop-color="#0065ce"/><stop offset="0.400" stop-color="#0069d4"/><stop offset="0.450" stop-color="#006cda"/><stop offset="0.500" stop-color="#006edd"/><stop offset="0.550" stop-color="#006fe0"/><stop offset="0.600" stop-color="#006fe0"/><stop offset="0.650" stop-color="#006fdf"/><stop offset="0.700" stop-color="#0071e3"/><stop offset="0.750" stop-color="#0074e8"/><stop offset="0.800" stop-color="#0075eb"/><stop offset="0.850" stop-color="#0075eb"/><stop offset="0.900" stop-color="#0074e8"/><stop offset="0.950" stop-color="#006ede"/><stop offset="1.000" stop-color="#0057b3"/></linearGradient>
<linearGradient id="s39" gradientUnits="userSpaceOnUse" x1="178.5" y1="0" x2="640.5" y2="0"><stop offset="0.000" stop-color="#001b43"/><stop offset="0.050" stop-color="#002f69"/><stop offset="0.100" stop-color="#003e86"/><stop offset="0.150" stop-color="#004a9a"/><stop offset="0.200" stop-color="#0053ab"/><stop offset="0.250" stop-color="#005ab8"/><stop offset="0.300" stop-color="#0060c3"/><stop offset="0.350" stop-color="#0064cb"/><stop offset="0.400" stop-color="#0068d2"/><stop offset="0.450" stop-color="#006bd8"/><stop offset="0.500" stop-color="#006ddb"/><stop offset="0.550" stop-color="#006ede"/><stop offset="0.600" stop-color="#006ede"/><stop offset="0.650" stop-color="#006edd"/><stop offset="0.700" stop-color="#0070e0"/><stop offset="0.750" stop-color="#0072e5"/><stop offset="0.800" stop-color="#0074e8"/><stop offset="0.850" stop-color="#0074e8"/><stop offset="0.900" stop-color="#0072e5"/><stop offset="0.950" stop-color="#006ddb"/><stop offset="1.000" stop-color="#0056b0"/></linearGradient>
<linearGradient id="s40" gradientUnits="userSpaceOnUse" x1="178.7" y1="0" x2="640.3" y2="0"><stop offset="0.000" stop-color="#001b43"/><stop offset="0.050" stop-color="#002e67"/><stop offset="0.100" stop-color="#003d83"/><stop offset="0.150" stop-color="#004998"/><stop offset="0.200" stop-color="#0051a9"/><stop offset="0.250" stop-color="#0059b6"/><stop offset="0.300" stop-color="#005ec1"/><stop offset="0.350" stop-color="#0063c9"/><stop offset="0.400" stop-color="#0067d0"/><stop offset="0.450" stop-color="#006ad6"/><stop offset="0.500" stop-color="#006cd9"/><stop offset="0.550" stop-color="#006ddb"/><stop offset="0.600" stop-color="#006ddc"/><stop offset="0.650" stop-color="#006ddb"/><stop offset="0.700" stop-color="#006edd"/><stop offset="0.750" stop-color="#0071e2"/><stop offset="0.800" stop-color="#0072e5"/><stop offset="0.850" stop-color="#0072e5"/><stop offset="0.900" stop-color="#0070e2"/><stop offset="0.950" stop-color="#006bd8"/><stop offset="1.000" stop-color="#0054ae"/></linearGradient>
<linearGradient id="s41" gradientUnits="userSpaceOnUse" x1="179.1" y1="0" x2="639.9" y2="0"><stop offset="0.000" stop-color="#001b43"/><stop offset="0.050" stop-color="#002d64"/><stop offset="0.100" stop-color="#003c81"/><stop offset="0.150" stop-color="#004796"/><stop offset="0.200" stop-color="#0050a6"/><stop offset="0.250" stop-color="#0057b4"/><stop offset="0.300" stop-color="#005dbe"/><stop offset="0.350" stop-color="#0062c7"/><stop offset="0.400" stop-color="#0066ce"/><stop offset="0.450" stop-color="#0068d3"/><stop offset="0.500" stop-color="#006ad7"/><stop offset="0.550" stop-color="#006cd9"/><stop offset="0.600" stop-color="#006cda"/><stop offset="0.650" stop-color="#006bd9"/><stop offset="0.700" stop-color="#006cda"/><stop offset="0.750" stop-color="#006fdf"/><stop offset="0.800" stop-color="#0070e2"/><stop offset="0.850" stop-color="#0071e2"/><stop offset="0.900" stop-color="#006fdf"/><stop offset="0.950" stop-color="#0069d5"/><stop offset="1.000" stop-color="#0053ab"/></linearGradient>
<linearGradient id="s42" gradientUnits="userSpaceOnUse" x1="179.6" y1="0" x2="639.4" y2="0"><stop offset="0.000" stop-color="#001b43"/><stop offset="0.050" stop-color="#002b62"/><stop offset="0.100" stop-color="#003b7f"/><stop offset="0.150" stop-color="#004694"/><stop offset="0.200" stop-color="#004fa4"/><stop offset="0.250" stop-color="#0056b1"/><stop offset="0.300" stop-color="#005cbc"/><stop offset="0.350" stop-color="#0061c5"/><stop offset="0.400" stop-color="#0064cc"/><stop offset="0.450" stop-color="#0067d1"/><stop offset="0.500" stop-color="#0069d5"/><stop offset="0.550" stop-color="#006ad7"/><stop offset="0.600" stop-color="#006bd7"/><stop offset="0.650" stop-color="#006ad6"/><stop offset="0.700" stop-color="#006bd7"/><stop offset="0.750" stop-color="#006ddc"/><stop offset="0.800" stop-color="#006fdf"/><stop offset="0.850" stop-color="#006fdf"/><stop offset="0.900" stop-color="#006ddc"/><stop offset="0.950" stop-color="#0068d2"/><stop offset="1.000" stop-color="#0051a8"/></linearGradient>
<linearGradient id="s43" gradientUnits="userSpaceOnUse" x1="180.2" y1="0" x2="638.8" y2="0"><stop offset="0.000" stop-color="#001b43"/><stop offset="0.050" stop-color="#002a60"/><stop offset="0.100" stop-color="#003a7d"/><stop offset="0.150" stop-color="#004592"/><stop offset="0.200" stop-color="#004ea2"/><stop offset="0.250" stop-color="#0055af"/><stop offset="0.300" stop-color="#005bba"/><stop offset="0.350" stop-color="#005fc2"/><stop offset="0.400" stop-color="#0063c9"/><stop offset="0.450" stop-color="#0066cf"/><stop offset="0.500" stop-color="#0068d2"/><stop offset="0.550" stop-color="#0069d4"/><stop offset="0.600" stop-color="#0069d5"/><stop offset="0.650" stop-color="#0069d4"/><stop offset="0.700" stop-color="#0069d4"/><stop offset="0.750" stop-color="#006bd9"/><stop offset="0.800" stop-color="#006ddc"/><stop offset="0.850" stop-color="#006ddc"/><stop offset="0.900" stop-color="#006bd8"/><stop offset="0.950" stop-color="#0066ce"/><stop offset="1.000" stop-color="#004fa5"/></linearGradient>
<linearGradient id="s44" gradientUnits="userSpaceOnUse" x1="181.0" y1="0" x2="638.0" y2="0"><stop offset="0.000" stop-color="#001b43"/><stop offset="0.050" stop-color="#00295e"/><stop offset="0.100" stop-color="#00387a"/><stop offset="0.150" stop-color="#00448f"/><stop offset="0.200" stop-color="#004c9f"/><stop offset="0.250" stop-color="#0054ac"/><stop offset="0.300" stop-color="#0059b7"/><stop offset="0.350" stop-color="#005ec0"/><stop offset="0.400" stop-color="#0062c7"/><stop offset="0.450" stop-color="#0065cc"/><stop offset="0.500" stop-color="#0066d0"/><stop offset="0.550" stop-color="#0068d2"/><stop offset="0.600" stop-color="#0068d2"/><stop offset="0.650" stop-color="#0067d1"/><stop offset="0.700" stop-color="#0067d1"/><stop offset="0.750" stop-color="#006ad5"/><stop offset="0.800" stop-color="#006bd8"/><stop offset="0.850" stop-color="#006bd8"/><stop offset="0.900" stop-color="#0069d5"/><stop offset="0.950" stop-color="#0064cb"/><stop offset="1.000" stop-color="#004ea1"/></linearGradient>
<linearGradient id="s45" gradientUnits="userSpaceOnUse" x1="182.0" y1="0" x2="637.0" y2="0"><stop offset="0.000" stop-color="#001b43"/><stop offset="0.053" stop-color="#00295d"/><stop offset="0.105" stop-color="#00397b"/><stop offset="0.158" stop-color="#004490"/><stop offset="0.211" stop-color="#004da0"/><stop offset="0.263" stop-color="#0054ad"/><stop offset="0.316" stop-color="#0059b8"/><stop offset="0.368" stop-color="#005ec0"/><stop offset="0.421" stop-color="#0062c6"/><stop offset="0.474" stop-color="#0064cb"/><stop offset="0.526" stop-color="#0066ce"/><stop offset="0.579" stop-color="#0066cf"/><stop offset="0.632" stop-color="#0066cf"/><stop offset="0.684" stop-color="#0065cd"/><stop offset="0.737" stop-color="#0067d1"/><stop offset="0.789" stop-color="#0069d4"/><stop offset="0.842" stop-color="#0069d5"/><stop offset="0.895" stop-color="#0068d2"/><stop offset="0.947" stop-color="#0063c8"/><stop offset="1.000" stop-color="#004c9e"/></linearGradient>
<linearGradient id="s46" gradientUnits="userSpaceOnUse" x1="183.1" y1="0" x2="635.9" y2="0"><stop offset="0.000" stop-color="#001b43"/><stop offset="0.053" stop-color="#00275b"/><stop offset="0.105" stop-color="#003778"/><stop offset="0.158" stop-color="#00428d"/><stop offset="0.211" stop-color="#004b9d"/><stop offset="0.263" stop-color="#0052aa"/><stop offset="0.316" stop-color="#0058b5"/><stop offset="0.368" stop-color="#005dbd"/><stop offset="0.421" stop-color="#0060c4"/><stop offset="0.474" stop-color="#0063c8"/><stop offset="0.526" stop-color="#0064cb"/><stop offset="0.579" stop-color="#0065cd"/><stop offset="0.632" stop-color="#0065cc"/><stop offset="0.684" stop-color="#0063ca"/><stop offset="0.737" stop-color="#0065cd"/><stop offset="0.789" stop-color="#0067d1"/><stop offset="0.842" stop-color="#0067d1"/><stop offset="0.895" stop-color="#0066ce"/><stop offset="0.947" stop-color="#0061c5"/><stop offset="1.000" stop-color="#004a9b"/></linearGradient>
<linearGradient id="s47" gradientUnits="userSpaceOnUse" x1="184.5" y1="0" x2="634.5" y2="0"><stop offset="0.000" stop-color="#001b43"/><stop offset="0.053" stop-color="#002659"/><stop offset="0.105" stop-color="#003676"/><stop offset="0.158" stop-color="#00418a"/><stop offset="0.211" stop-color="#004a9b"/><stop offset="0.263" stop-color="#0051a8"/><stop offset="0.316" stop-color="#0057b2"/><stop offset="0.368" stop-color="#005bba"/><stop offset="0.421" stop-color="#005ec1"/><stop offset="0.474" stop-color="#0061c5"/><stop offset="0.526" stop-color="#0063c8"/><stop offset="0.579" stop-color="#0063ca"/><stop offset="0.632" stop-color="#0063c9"/><stop offset="0.684" stop-color="#0062c7"/><stop offset="0.737" stop-color="#0063c9"/><stop offset="0.789" stop-color="#0065cd"/><stop offset="0.842" stop-color="#0065ce"/><stop offset="0.895" stop-color="#0064cb"/><stop offset="0.947" stop-color="#005fc1"/><stop offset="1.000" stop-color="#004898"/></linearGradient>
<linearGradient id="s48" gradientUnits="userSpaceOnUse" x1="185.9" y1="0" x2="633.1" y2="0"><stop offset="0.000" stop-color="#001b43"/><stop offset="0.053" stop-color="#002556"/><stop offset="0.105" stop-color="#003473"/><stop offset="0.158" stop-color="#004088"/><stop offset="0.211" stop-color="#004898"/><stop offset="0.263" stop-color="#004fa5"/><stop offset="0.316" stop-color="#0055af"/><stop offset="0.368" stop-color="#0059b7"/><stop offset="0.421" stop-color="#005dbe"/><stop offset="0.474" stop-color="#005fc2"/><stop offset="0.526" stop-color="#0061c5"/><stop offset="0.579" stop-color="#0062c7"/><stop offset="0.632" stop-color="#0061c6"/><stop offset="0.684" stop-color="#0060c4"/><stop offset="0.737" stop-color="#0061c6"/><stop offset="0.789" stop-color="#0063c9"/><stop offset="0.842" stop-color="#0063ca"/><stop offset="0.895" stop-color="#0062c7"/><stop offset="0.947" stop-color="#005cbd"/><stop offset="1.000" stop-color="#004694"/></linearGradient>
<linearGradient id="s49" gradientUnits="userSpaceOnUse" x1="187.6" y1="0" x2="631.4" y2="0"><stop offset="0.000" stop-color="#001b43"/><stop offset="0.053" stop-color="#002454"/><stop offset="0.105" stop-color="#003371"/><stop offset="0.158" stop-color="#003e85"/><stop offset="0.211" stop-color="#004795"/><stop offset="0.263" stop-color="#004ea2"/><stop offset="0.316" stop-color="#0053ac"/><stop offset="0.368" stop-color="#0058b4"/><stop offset="0.421" stop-color="#005bbb"/><stop offset="0.474" stop-color="#005ebf"/><stop offset="0.526" stop-color="#005fc2"/><stop offset="0.579" stop-color="#0060c4"/><stop offset="0.632" stop-color="#0060c3"/><stop offset="0.684" stop-color="#005ec1"/><stop offset="0.737" stop-color="#005fc2"/><stop offset="0.789" stop-color="#0061c5"/><stop offset="0.842" stop-color="#0061c6"/><stop offset="0.895" stop-color="#0060c3"/><stop offset="0.947" stop-color="#005ab9"/><stop offset="1.000" stop-color="#004490"/></linearGradient>
<linearGradient id="s50" gradientUnits="userSpaceOnUse" x1="189.4" y1="0" x2="629.6" y2="0"><stop offset="0.000" stop-color="#001b43"/><stop offset="0.053" stop-color="#002251"/><stop offset="0.105" stop-color="#00326e"/><stop offset="0.158" stop-color="#003d82"/><stop offset="0.211" stop-color="#004592"/><stop offset="0.263" stop-color="#004c9f"/><stop offset="0.316" stop-color="#0052a9"/><stop offset="0.368" stop-color="#0056b1"/><stop offset="0.421" stop-color="#0059b8"/><stop offset="0.474" stop-color="#005cbc"/><stop offset="0.526" stop-color="#005ebf"/><stop offset="0.579" stop-color="#005ec0"/><stop offset="0.632" stop-color="#005ec0"/><stop offset="0.684" stop-color="#005dbd"/><stop offset="0.737" stop-color="#005dbe"/><stop offset="0.789" stop-color="#005fc1"/><stop offset="0.842" stop-color="#005fc2"/><stop offset="0.895" stop-color="#005dbf"/><stop offset="0.947" stop-color="#0058b5"/><stop offset="1.000" stop-color="#00428d"/></linearGradient>
<linearGradient id="s51" gradientUnits="userSpaceOnUse" x1="191.4" y1="0" x2="627.6" y2="0"><stop offset="0.000" stop-color="#001b43"/><stop offset="0.053" stop-color="#00214f"/><stop offset="0.105" stop-color="#00306b"/><stop offset="0.158" stop-color="#003b7f"/><stop offset="0.211" stop-color="#00448f"/><stop offset="0.263" stop-color="#004a9c"/><stop offset="0.316" stop-color="#0050a6"/><stop offset="0.368" stop-color="#0054ae"/><stop offset="0.421" stop-color="#0058b4"/><stop offset="0.474" stop-color="#005ab9"/><stop offset="0.526" stop-color="#005cbc"/><stop offset="0.579" stop-color="#005cbd"/><stop offset="0.632" stop-color="#005cbc"/><stop offset="0.684" stop-color="#005bba"/><stop offset="0.737" stop-color="#005ab9"/><stop offset="0.789" stop-color="#005cbd"/><stop offset="0.842" stop-color="#005dbd"/><stop offset="0.895" stop-color="#005bba"/><stop offset="0.947" stop-color="#0056b1"/><stop offset="1.000" stop-color="#004089"/></linearGradient>
<linearGradient id="s52" gradientUnits="userSpaceOnUse" x1="193.6" y1="0" x2="625.4" y2="0"><stop offset="0.000" stop-color="#001b43"/><stop offset="0.056" stop-color="#00214e"/><stop offset="0.111" stop-color="#00306b"/><stop offset="0.167" stop-color="#003b7f"/><stop offset="0.222" stop-color="#00448f"/><stop offset="0.278" stop-color="#004a9c"/><stop offset="0.333" stop-color="#0050a5"/><stop offset="0.389" stop-color="#0054ad"/><stop offset="0.444" stop-color="#0057b3"/><stop offset="0.500" stop-color="#0059b7"/><stop offset="0.556" stop-color="#005ab9"/><stop offset="0.611" stop-color="#005ab9"/><stop offset="0.667" stop-color="#0059b8"/><stop offset="0.722" stop-color="#0057b4"/><stop offset="0.778" stop-color="#005ab8"/><stop offset="0.833" stop-color="#005ab9"/><stop offset="0.889" stop-color="#0059b6"/><stop offset="0.944" stop-color="#0054ad"/><stop offset="1.000" stop-color="#003f86"/></linearGradient>
<linearGradient id="s53" gradientUnits="userSpaceOnUse" x1="196.0" y1="0" x2="623.0" y2="0"><stop offset="0.000" stop-color="#001b43"/><stop offset="0.056" stop-color="#001f4c"/><stop offset="0.111" stop-color="#002f68"/><stop offset="0.167" stop-color="#00397c"/><stop offset="0.222" stop-color="#00428c"/><stop offset="0.278" stop-color="#004998"/><stop offset="0.333" stop-color="#004ea2"/><stop offset="0.389" stop-color="#0052aa"/><stop offset="0.444" stop-color="#0055af"/><stop offset="0.500" stop-color="#0057b3"/><stop offset="0.556" stop-color="#0058b5"/><stop offset="0.611" stop-color="#0058b6"/><stop offset="0.667" stop-color="#0057b4"/><stop offset="0.722" stop-color="#0055b0"/><stop offset="0.778" stop-color="#0057b3"/><stop offset="0.833" stop-color="#0058b4"/><stop offset="0.889" stop-color="#0056b2"/><stop offset="0.944" stop-color="#0051a9"/><stop offset="1.000" stop-color="#003e84"/></linearGradient>
<linearGradient id="s54" gradientUnits="userSpaceOnUse" x1="198.6" y1="0" x2="620.4" y2="0"><stop offset="0.000" stop-color="#001b43"/><stop offset="0.056" stop-color="#001e49"/><stop offset="0.111" stop-color="#002d65"/><stop offset="0.167" stop-color="#003879"/><stop offset="0.222" stop-color="#004088"/><stop offset="0.278" stop-color="#004795"/><stop offset="0.333" stop-color="#004c9e"/><stop offset="0.389" stop-color="#0050a6"/><stop offset="0.444" stop-color="#0053ac"/><stop offset="0.500" stop-color="#0055af"/><stop offset="0.556" stop-color="#0056b2"/><stop offset="0.611" stop-color="#0056b2"/><stop offset="0.667" stop-color="#0055b0"/><stop offset="0.722" stop-color="#0053ac"/><stop offset="0.778" stop-color="#0055ae"/><stop offset="0.833" stop-color="#0055b0"/><stop offset="0.889" stop-color="#0054ad"/><stop offset="0.944" stop-color="#004fa4"/><stop offset="1.000" stop-color="#003d83"/></linearGradient>
<linearGradient id="s55" gradientUnits="userSpaceOnUse" x1="201.4" y1="0" x2="617.6" y2="0"><stop offset="0.000" stop-color="#001b43"/><stop offset="0.056" stop-color="#001c46"/><stop offset="0.111" stop-color="#002b62"/><stop offset="0.167" stop-color="#003676"/><stop offset="0.222" stop-color="#003e85"/><stop offset="0.278" stop-color="#004591"/><stop offset="0.333" stop-color="#004a9b"/><stop offset="0.389" stop-color="#004ea2"/><stop offset="0.444" stop-color="#0051a8"/><stop offset="0.500" stop-color="#0053ac"/><stop offset="0.556" stop-color="#0054ae"/><stop offset="0.611" stop-color="#0054ae"/><stop offset="0.667" stop-color="#0053ac"/><stop offset="0.722" stop-color="#0051a8"/><stop offset="0.778" stop-color="#0052aa"/><stop offset="0.833" stop-color="#0053ab"/><stop offset="0.889" stop-color="#0051a8"/><stop offset="0.944" stop-color="#004c9f"/><stop offset="1.000" stop-color="#003c81"/></linearGradient>
<linearGradient id="s56" gradientUnits="userSpaceOnUse" x1="204.4" y1="0" x2="614.6" y2="0"><stop offset="0.000" stop-color="#001b43"/><stop offset="0.056" stop-color="#001b44"/><stop offset="0.111" stop-color="#002a5f"/><stop offset="0.167" stop-color="#003473"/><stop offset="0.222" stop-color="#003c82"/><stop offset="0.278" stop-color="#00438d"/><stop offset="0.333" stop-color="#004897"/><stop offset="0.389" stop-color="#004c9e"/><stop offset="0.444" stop-color="#004fa4"/><stop offset="0.500" stop-color="#0051a7"/><stop offset="0.556" stop-color="#0052a9"/><stop offset="0.611" stop-color="#0052aa"/><stop offset="0.667" stop-color="#0051a8"/><stop offset="0.722" stop-color="#004fa4"/><stop offset="0.778" stop-color="#004fa5"/><stop offset="0.833" stop-color="#0050a6"/><stop offset="0.889" stop-color="#004fa3"/><stop offset="0.944" stop-color="#004a9a"/><stop offset="1.000" stop-color="#003b7f"/></linearGradient>
<linearGradient id="s57" gradientUnits="userSpaceOnUse" x1="207.6" y1="0" x2="611.4" y2="0"><stop offset="0.000" stop-color="#001b43"/><stop offset="0.059" stop-color="#001b43"/><stop offset="0.118" stop-color="#00295e"/><stop offset="0.176" stop-color="#003472"/><stop offset="0.235" stop-color="#003c81"/><stop offset="0.294" stop-color="#00428d"/><stop offset="0.353" stop-color="#004796"/><stop offset="0.412" stop-color="#004b9d"/><stop offset="0.471" stop-color="#004ea2"/><stop offset="0.529" stop-color="#004fa4"/><stop offset="0.588" stop-color="#0050a6"/><stop offset="0.647" stop-color="#004fa5"/><stop offset="0.706" stop-color="#004ea1"/><stop offset="0.765" stop-color="#004c9f"/><stop offset="0.824" stop-color="#004da1"/><stop offset="0.882" stop-color="#004c9f"/><stop offset="0.941" stop-color="#004796"/><stop offset="1.000" stop-color="#003a7d"/></linearGradient>
<linearGradient id="s58" gradientUnits="userSpaceOnUse" x1="211.1" y1="0" x2="607.9" y2="0"><stop offset="0.000" stop-color="#001b43"/><stop offset="0.059" stop-color="#001b43"/><stop offset="0.118" stop-color="#00285b"/><stop offset="0.176" stop-color="#00326e"/><stop offset="0.235" stop-color="#003a7d"/><stop offset="0.294" stop-color="#004089"/><stop offset="0.353" stop-color="#004592"/><stop offset="0.412" stop-color="#004998"/><stop offset="0.471" stop-color="#004b9d"/><stop offset="0.529" stop-color="#004da0"/><stop offset="0.588" stop-color="#004da1"/><stop offset="0.647" stop-color="#004da0"/><stop offset="0.706" stop-color="#004b9d"/><stop offset="0.765" stop-color="#004999"/><stop offset="0.824" stop-color="#004a9b"/><stop offset="0.882" stop-color="#004999"/><stop offset="0.941" stop-color="#004591"/><stop offset="1.000" stop-color="#00397b"/></linearGradient>
<linearGradient id="s59" gradientUnits="userSpaceOnUse" x1="214.8" y1="0" x2="604.2" y2="0"><stop offset="0.000" stop-color="#001b43"/><stop offset="0.059" stop-color="#001b43"/><stop offset="0.118" stop-color="#002658"/><stop offset="0.176" stop-color="#00306b"/><stop offset="0.235" stop-color="#003879"/><stop offset="0.294" stop-color="#003e84"/><stop offset="0.353" stop-color="#00438d"/><stop offset="0.412" stop-color="#004694"/><stop offset="0.471" stop-color="#004999"/><stop offset="0.529" stop-color="#004a9c"/><stop offset="0.588" stop-color="#004b9d"/><stop offset="0.647" stop-color="#004a9c"/><stop offset="0.706" stop-color="#004999"/><stop offset="0.765" stop-color="#004694"/><stop offset="0.824" stop-color="#004796"/><stop offset="0.882" stop-color="#004694"/><stop offset="0.941" stop-color="#00428b"/><stop offset="1.000" stop-color="#003879"/></linearGradient>
<linearGradient id="s60" gradientUnits="userSpaceOnUse" x1="218.8" y1="0" x2="600.2" y2="0"><stop offset="0.000" stop-color="#001b43"/><stop offset="0.062" stop-color="#001b43"/><stop offset="0.125" stop-color="#002557"/><stop offset="0.188" stop-color="#002f6a"/><stop offset="0.250" stop-color="#003778"/><stop offset="0.312" stop-color="#003d83"/><stop offset="0.375" stop-color="#00428b"/><stop offset="0.438" stop-color="#004592"/><stop offset="0.500" stop-color="#004796"/><stop offset="0.562" stop-color="#004898"/><stop offset="0.625" stop-color="#004897"/><stop offset="0.688" stop-color="#004795"/><stop offset="0.750" stop-color="#004490"/><stop offset="0.812" stop-color="#004490"/><stop offset="0.875" stop-color="#00438e"/><stop offset="0.938" stop-color="#003f87"/><stop offset="1.000" stop-color="#003677"/></linearGradient>
<linearGradient id="s61" gradientUnits="userSpaceOnUse" x1="223.0" y1="0" x2="596.0" y2="0"><stop offset="0.000" stop-color="#001b43"/><stop offset="0.062" stop-color="#001b43"/><stop offset="0.125" stop-color="#002353"/><stop offset="0.188" stop-color="#002d66"/><stop offset="0.250" stop-color="#003574"/><stop offset="0.312" stop-color="#003b7f"/><stop offset="0.375" stop-color="#003f87"/><stop offset="0.438" stop-color="#00428d"/><stop offset="0.500" stop-color="#004491"/><stop offset="0.562" stop-color="#004593"/><stop offset="0.625" stop-color="#004592"/><stop offset="0.688" stop-color="#004490"/><stop offset="0.750" stop-color="#00428b"/><stop offset="0.812" stop-color="#00418a"/><stop offset="0.875" stop-color="#004088"/><stop offset="0.938" stop-color="#003c81"/><stop offset="1.000" stop-color="#003574"/></linearGradient>
<linearGradient id="s62" gradientUnits="userSpaceOnUse" x1="227.6" y1="0" x2="591.4" y2="0"><stop offset="0.000" stop-color="#001b43"/><stop offset="0.062" stop-color="#001b43"/><stop offset="0.125" stop-color="#002150"/><stop offset="0.188" stop-color="#002b62"/><stop offset="0.250" stop-color="#00326f"/><stop offset="0.312" stop-color="#00387a"/><stop offset="0.375" stop-color="#003c82"/><stop offset="0.438" stop-color="#004088"/><stop offset="0.500" stop-color="#00428b"/><stop offset="0.562" stop-color="#00438d"/><stop offset="0.625" stop-color="#00438d"/><stop offset="0.688" stop-color="#00418b"/><stop offset="0.750" stop-color="#003f86"/><stop offset="0.812" stop-color="#003d84"/><stop offset="0.875" stop-color="#003d82"/><stop offset="0.938" stop-color="#00397b"/><stop offset="1.000" stop-color="#003472"/></linearGradient>
<linearGradient id="s63" gradientUnits="userSpaceOnUse" x1="232.4" y1="0" x2="586.6" y2="0"><stop offset="0.000" stop-color="#001b43"/><stop offset="0.067" stop-color="#001b43"/><stop offset="0.133" stop-color="#00214e"/><stop offset="0.200" stop-color="#002a60"/><stop offset="0.267" stop-color="#00326e"/><stop offset="0.333" stop-color="#003778"/><stop offset="0.400" stop-color="#003b7f"/><stop offset="0.467" stop-color="#003e84"/><stop offset="0.533" stop-color="#003f87"/><stop offset="0.600" stop-color="#004088"/><stop offset="0.667" stop-color="#003f87"/><stop offset="0.733" stop-color="#003d82"/><stop offset="0.800" stop-color="#003a7d"/><stop offset="0.867" stop-color="#00397c"/><stop offset="0.933" stop-color="#003675"/><stop offset="1.000" stop-color="#003370"/></linearGradient>
<linearGradient id="s64" gradientUnits="userSpaceOnUse" x1="237.7" y1="0" x2="581.3" y2="0"><stop offset="0.000" stop-color="#001b43"/><stop offset="0.067" stop-color="#001b43"/><stop offset="0.133" stop-color="#001e4a"/><stop offset="0.200" stop-color="#00285c"/><stop offset="0.267" stop-color="#002f69"/><stop offset="0.333" stop-color="#003473"/><stop offset="0.400" stop-color="#00387a"/><stop offset="0.467" stop-color="#003b7f"/><stop offset="0.533" stop-color="#003c82"/><stop offset="0.600" stop-color="#003d82"/><stop offset="0.667" stop-color="#003c81"/><stop offset="0.733" stop-color="#003a7d"/><stop offset="0.800" stop-color="#003676"/><stop offset="0.867" stop-color="#003676"/><stop offset="0.933" stop-color="#00326e"/><stop offset="1.000" stop-color="#00316d"/></linearGradient>
<linearGradient id="s65" gradientUnits="userSpaceOnUse" x1="243.3" y1="0" x2="575.7" y2="0"><stop offset="0.000" stop-color="#001b43"/><stop offset="0.071" stop-color="#001b43"/><stop offset="0.143" stop-color="#001e49"/><stop offset="0.214" stop-color="#00275a"/><stop offset="0.286" stop-color="#002e67"/><stop offset="0.357" stop-color="#003370"/><stop offset="0.429" stop-color="#003676"/><stop offset="0.500" stop-color="#00397b"/><stop offset="0.571" stop-color="#003a7c"/><stop offset="0.643" stop-color="#00397c"/><stop offset="0.714" stop-color="#003779"/><stop offset="0.786" stop-color="#003472"/><stop offset="0.857" stop-color="#00326f"/><stop offset="0.929" stop-color="#002f68"/><stop offset="1.000" stop-color="#00306a"/></linearGradient>
<linearGradient id="s66" gradientUnits="userSpaceOnUse" x1="249.3" y1="0" x2="569.7" y2="0"><stop offset="0.000" stop-color="#001b43"/><stop offset="0.071" stop-color="#001b43"/><stop offset="0.143" stop-color="#001b44"/><stop offset="0.214" stop-color="#002455"/><stop offset="0.286" stop-color="#002b61"/><stop offset="0.357" stop-color="#00306a"/><stop offset="0.429" stop-color="#003370"/><stop offset="0.500" stop-color="#003574"/><stop offset="0.571" stop-color="#003676"/><stop offset="0.643" stop-color="#003676"/><stop offset="0.714" stop-color="#003472"/><stop offset="0.786" stop-color="#00316c"/><stop offset="0.857" stop-color="#002e68"/><stop offset="0.929" stop-color="#002b61"/><stop offset="1.000" stop-color="#002e67"/></linearGradient>
<linearGradient id="s67" gradientUnits="userSpaceOnUse" x1="255.8" y1="0" x2="563.2" y2="0"><stop offset="0.000" stop-color="#001b43"/><stop offset="0.077" stop-color="#001b43"/><stop offset="0.154" stop-color="#001b43"/><stop offset="0.231" stop-color="#002353"/><stop offset="0.308" stop-color="#00295e"/><stop offset="0.385" stop-color="#002e67"/><stop offset="0.462" stop-color="#00316c"/><stop offset="0.538" stop-color="#00326f"/><stop offset="0.615" stop-color="#003370"/><stop offset="0.692" stop-color="#00316d"/><stop offset="0.769" stop-color="#002e67"/><stop offset="0.846" stop-color="#002a60"/><stop offset="0.923" stop-color="#00275a"/><stop offset="1.000" stop-color="#002c64"/></linearGradient>
<linearGradient id="s68" gradientUnits="userSpaceOnUse" x1="262.8" y1="0" x2="556.2" y2="0"><stop offset="0.000" stop-color="#001b43"/><stop offset="0.077" stop-color="#001b43"/><stop offset="0.154" stop-color="#001b43"/><stop offset="0.231" stop-color="#00204d"/><stop offset="0.308" stop-color="#002658"/><stop offset="0.385" stop-color="#002a60"/><stop offset="0.462" stop-color="#002d65"/><stop offset="0.538" stop-color="#002f68"/><stop offset="0.615" stop-color="#002f69"/><stop offset="0.692" stop-color="#002e66"/><stop offset="0.769" stop-color="#002b61"/><stop offset="0.846" stop-color="#002658"/><stop offset="0.923" stop-color="#002352"/><stop offset="1.000" stop-color="#002b61"/></linearGradient>
<linearGradient id="s69" gradientUnits="userSpaceOnUse" x1="270.5" y1="0" x2="548.5" y2="0"><stop offset="0.000" stop-color="#001b43"/><stop offset="0.083" stop-color="#001b43"/><stop offset="0.167" stop-color="#001b43"/><stop offset="0.250" stop-color="#001e4a"/><stop offset="0.333" stop-color="#002454"/><stop offset="0.417" stop-color="#00285b"/><stop offset="0.500" stop-color="#002a60"/><stop offset="0.583" stop-color="#002b61"/><stop offset="0.667" stop-color="#002a60"/><stop offset="0.750" stop-color="#00285b"/><stop offset="0.833" stop-color="#002352"/><stop offset="0.917" stop-color="#00204c"/><stop offset="1.000" stop-color="#00295d"/></linearGradient>
<linearGradient id="s70" gradientUnits="userSpaceOnUse" x1="278.9" y1="0" x2="540.1" y2="0"><stop offset="0.000" stop-color="#001b43"/><stop offset="0.091" stop-color="#001b43"/><stop offset="0.182" stop-color="#001b43"/><stop offset="0.273" stop-color="#001c46"/><stop offset="0.364" stop-color="#002150"/><stop offset="0.455" stop-color="#002556"/><stop offset="0.545" stop-color="#002659"/><stop offset="0.636" stop-color="#002659"/><stop offset="0.727" stop-color="#002455"/><stop offset="0.818" stop-color="#00204d"/><stop offset="0.909" stop-color="#001e49"/><stop offset="1.000" stop-color="#002759"/></linearGradient>
<linearGradient id="s71" gradientUnits="userSpaceOnUse" x1="288.2" y1="0" x2="530.8" y2="0"><stop offset="0.000" stop-color="#001b43"/><stop offset="0.091" stop-color="#001b43"/><stop offset="0.182" stop-color="#001b43"/><stop offset="0.273" stop-color="#001b43"/><stop offset="0.364" stop-color="#001d48"/><stop offset="0.455" stop-color="#00204d"/><stop offset="0.545" stop-color="#002250"/><stop offset="0.636" stop-color="#002250"/><stop offset="0.727" stop-color="#00204d"/><stop offset="0.818" stop-color="#001c45"/><stop offset="0.909" stop-color="#001c46"/><stop offset="1.000" stop-color="#002455"/></linearGradient>
<linearGradient id="s72" gradientUnits="userSpaceOnUse" x1="298.5" y1="0" x2="520.5" y2="0"><stop offset="0.000" stop-color="#001b43"/><stop offset="0.100" stop-color="#001b43"/><stop offset="0.200" stop-color="#001b43"/><stop offset="0.300" stop-color="#001b43"/><stop offset="0.400" stop-color="#001b43"/><stop offset="0.500" stop-color="#001c46"/><stop offset="0.600" stop-color="#001d47"/><stop offset="0.700" stop-color="#001b45"/><stop offset="0.800" stop-color="#001b43"/><stop offset="0.900" stop-color="#001b43"/><stop offset="1.000" stop-color="#002251"/></linearGradient>
<linearGradient id="s73" gradientUnits="userSpaceOnUse" x1="310.3" y1="0" x2="508.7" y2="0"><stop offset="0.000" stop-color="#001b43"/><stop offset="0.111" stop-color="#001b43"/><stop offset="0.222" stop-color="#001b43"/><stop offset="0.333" stop-color="#001b43"/><stop offset="0.444" stop-color="#001b43"/><stop offset="0.556" stop-color="#001b43"/><stop offset="0.667" stop-color="#001b43"/><stop offset="0.778" stop-color="#001b43"/><stop offset="0.889" stop-color="#001b43"/><stop offset="1.000" stop-color="#001f4c"/></linearGradient>
<linearGradient id="s74" gradientUnits="userSpaceOnUse" x1="324.2" y1="0" x2="494.8" y2="0"><stop offset="0.000" stop-color="#001b43"/><stop offset="0.125" stop-color="#001b43"/><stop offset="0.250" stop-color="#001b43"/><stop offset="0.375" stop-color="#001b43"/><stop offset="0.500" stop-color="#001b43"/><stop offset="0.625" stop-color="#001b43"/><stop offset="0.750" stop-color="#001b43"/><stop offset="0.875" stop-color="#001b43"/><stop offset="1.000" stop-color="#001c46"/></linearGradient>
<linearGradient id="s75" gradientUnits="userSpaceOnUse" x1="341.4" y1="0" x2="477.6" y2="0"><stop offset="0.000" stop-color="#001b43"/><stop offset="0.167" stop-color="#001b43"/><stop offset="0.333" stop-color="#001b43"/><stop offset="0.500" stop-color="#001b43"/><stop offset="0.667" stop-color="#001b43"/><stop offset="0.833" stop-color="#001b43"/><stop offset="1.000" stop-color="#001b43"/></linearGradient>
<linearGradient id="s76" gradientUnits="userSpaceOnUse" x1="365.8" y1="0" x2="453.2" y2="0"><stop offset="0.000" stop-color="#001b43"/><stop offset="0.250" stop-color="#001b43"/><stop offset="0.500" stop-color="#001b43"/><stop offset="0.750" stop-color="#001b43"/><stop offset="1.000" stop-color="#001b43"/></linearGradient>
<clipPath id="sphclip"><polygon points="639.7,211.0 637.4,243.7 630.4,275.7 618.9,306.5 603.2,335.2 583.6,361.5 560.4,384.7 534.1,404.3 505.4,420.0 474.6,431.5 442.6,438.5 409.9,440.8 377.2,438.5 345.2,431.5 314.4,420.0 285.7,404.3 259.4,384.7 236.2,361.5 216.6,335.2 200.9,306.5 189.4,275.7 182.4,243.7 180.1,211.0 182.4,178.3 189.4,146.3 200.9,115.5 216.6,86.8 236.2,60.5 259.4,37.3 285.7,17.7 314.4,2.0 345.2,-9.5 377.2,-16.5 409.9,-18.8 442.6,-16.5 474.6,-9.5 505.4,2.0 534.1,17.7 560.4,37.3 583.6,60.5 603.2,86.8 618.9,115.5 630.4,146.3 637.4,178.3"/></clipPath>
</defs>
<g clip-path="url(#sphclip)" shape-rendering="crispEdges">
<rect x="355" y="-19" width="109" height="6" fill="url(#s0)"/>
<rect x="334" y="-13" width="151" height="6" fill="url(#s1)"/>
<rect x="318" y="-7" width="183" height="6" fill="url(#s2)"/>
<rect x="305" y="-1" width="209" height="6" fill="url(#s3)"/>
<rect x="293" y="5" width="232" height="6" fill="url(#s4)"/>
<rect x="283" y="11" width="252" height="6" fill="url(#s5)"/>
<rect x="275" y="17" width="269" height="6" fill="url(#s6)"/>
<rect x="266" y="23" width="286" height="6" fill="url(#s7)"/>
<rect x="259" y="29" width="301" height="6" fill="url(#s8)"/>
<rect x="252" y="35" width="314" height="6" fill="url(#s9)"/>
<rect x="246" y="41" width="327" height="6" fill="url(#s10)"/>
<rect x="240" y="47" width="339" height="6" fill="url(#s11)"/>
<rect x="234" y="53" width="350" height="6" fill="url(#s12)"/>
<rect x="229" y="59" width="360" height="6" fill="url(#s13)"/>
<rect x="225" y="65" width="369" height="6" fill="url(#s14)"/>
<rect x="220" y="71" width="378" height="6" fill="url(#s15)"/>
<rect x="216" y="77" width="387" height="6" fill="url(#s16)"/>
<rect x="212" y="83" width="394" height="6" fill="url(#s17)"/>
<rect x="208" y="89" width="402" height="6" fill="url(#s18)"/>
<rect x="205" y="95" width="408" height="6" fill="url(#s19)"/>
<rect x="202" y="101" width="415" height="6" fill="url(#s20)"/>
<rect x="199" y="107" width="421" height="6" fill="url(#s21)"/>
<rect x="196" y="113" width="426" height="6" fill="url(#s22)"/>
<rect x="194" y="119" width="431" height="6" fill="url(#s23)"/>
<rect x="191" y="125" width="436" height="6" fill="url(#s24)"/>
<rect x="189" y="131" width="440" height="6" fill="url(#s25)"/>
<rect x="187" y="137" width="444" height="6" fill="url(#s26)"/>
<rect x="186" y="143" width="447" height="6" fill="url(#s27)"/>
<rect x="184" y="149" width="451" height="6" fill="url(#s28)"/>
<rect x="183" y="155" width="453" height="6" fill="url(#s29)"/>
<rect x="181" y="161" width="456" height="6" fill="url(#s30)"/>
<rect x="180" y="167" width="458" height="6" fill="url(#s31)"/>
<rect x="179" y="173" width="460" height="6" fill="url(#s32)"/>
<rect x="178" y="179" width="462" height="6" fill="url(#s33)"/>
<rect x="178" y="185" width="463" height="6" fill="url(#s34)"/>
<rect x="177" y="191" width="464" height="6" fill="url(#s35)"/>
<rect x="177" y="197" width="464" height="6" fill="url(#s36)"/>
<rect x="177" y="203" width="464" height="6" fill="url(#s37)"/>
<rect x="177" y="209" width="465" height="6" fill="url(#s38)"/>
<rect x="177" y="215" width="464" height="6" fill="url(#s39)"/>
<rect x="177" y="221" width="464" height="6" fill="url(#s40)"/>
<rect x="178" y="227" width="463" height="6" fill="url(#s41)"/>
<rect x="178" y="233" width="462" height="6" fill="url(#s42)"/>
<rect x="179" y="239" width="461" height="6" fill="url(#s43)"/>
<rect x="180" y="245" width="459" height="6" fill="url(#s44)"/>
<rect x="181" y="251" width="457" height="6" fill="url(#s45)"/>
<rect x="182" y="257" width="455" height="6" fill="url(#s46)"/>
<rect x="183" y="263" width="453" height="6" fill="url(#s47)"/>
<rect x="184" y="269" width="450" height="6" fill="url(#s48)"/>
<rect x="186" y="275" width="446" height="6" fill="url(#s49)"/>
<rect x="188" y="281" width="443" height="6" fill="url(#s50)"/>
<rect x="190" y="287" width="439" height="6" fill="url(#s51)"/>
<rect x="192" y="293" width="434" height="6" fill="url(#s52)"/>
<rect x="195" y="299" width="429" height="6" fill="url(#s53)"/>
<rect x="197" y="305" width="424" height="6" fill="url(#s54)"/>
<rect x="200" y="311" width="419" height="6" fill="url(#s55)"/>
<rect x="203" y="317" width="413" height="6" fill="url(#s56)"/>
<rect x="206" y="323" width="406" height="6" fill="url(#s57)"/>
<rect x="210" y="329" width="399" height="6" fill="url(#s58)"/>
<rect x="213" y="335" width="392" height="6" fill="url(#s59)"/>
<rect x="217" y="341" width="384" height="6" fill="url(#s60)"/>
<rect x="222" y="347" width="375" height="6" fill="url(#s61)"/>
<rect x="226" y="353" width="366" height="6" fill="url(#s62)"/>
<rect x="231" y="359" width="357" height="6" fill="url(#s63)"/>
<rect x="236" y="365" width="346" height="6" fill="url(#s64)"/>
<rect x="242" y="371" width="335" height="6" fill="url(#s65)"/>
<rect x="248" y="377" width="323" height="6" fill="url(#s66)"/>
<rect x="254" y="383" width="310" height="6" fill="url(#s67)"/>
<rect x="261" y="389" width="296" height="6" fill="url(#s68)"/>
<rect x="269" y="395" width="281" height="6" fill="url(#s69)"/>
<rect x="277" y="401" width="264" height="6" fill="url(#s70)"/>
<rect x="287" y="407" width="245" height="6" fill="url(#s71)"/>
<rect x="297" y="413" width="224" height="6" fill="url(#s72)"/>
<rect x="309" y="419" width="201" height="6" fill="url(#s73)"/>
<rect x="323" y="425" width="173" height="6" fill="url(#s74)"/>
<rect x="340" y="431" width="139" height="6" fill="url(#s75)"/>
<rect x="364" y="437" width="90" height="6" fill="url(#s76)"/>
</g>
<!-- box -->
<g>
<path d="M466.4 447.4 L547.2 437.1 L587.7 460.4 L501.5 469.7 Z" fill="#0a5ccc" stroke="#0a5ccc" stroke-width="0.6"/>
<path d="M466.4 447.4 L501.5 469.7 L502.2 646.9 L466.4 617.4 Z" fill="#001a3e"/>
<path d="M501.5 469.7 L587.7 460.4 L585.5 634.5 L502.2 646.9 Z" fill="#0a68e0"/>
<path d="M477.3 625.2 L584.5 610.2 M544 598.7 L583 628.3 M466.4 591.6 L483.5 589.4" stroke="#e8f0ff" stroke-width="1" opacity="0.9"/>
</g>
<!-- capsule -->
<g>
<clipPath id="capclip"><path d="M717.7 358.3 C735 358 744.7 366.6 750 376 C755 386 755.5 400 755.5 420 L755 470.3 C753 485 748 492 740.5 496 C732 501 722 503.5 713.6 503.5 C703 503 695 498 690 490 C682 478 679.3 466 679.3 440 L679.3 404 C679.3 385 684 375 690.7 368 C697 361 707 358.5 717.7 358.3 Z"/></clipPath>
<defs>
<linearGradient id="c0" gradientUnits="userSpaceOnUse" x1="710.3" y1="0" x2="724.5" y2="0"><stop offset="0.000" stop-color="#0058b5"/><stop offset="0.500" stop-color="#0068d2"/><stop offset="1.000" stop-color="#0065cd"/></linearGradient>
<linearGradient id="c1" gradientUnits="userSpaceOnUse" x1="703.6" y1="0" x2="731.2" y2="0"><stop offset="0.000" stop-color="#0050a6"/><stop offset="0.333" stop-color="#0069d4"/><stop offset="0.667" stop-color="#0071e3"/><stop offset="1.000" stop-color="#0068d3"/></linearGradient>
<linearGradient id="c2" gradientUnits="userSpaceOnUse" x1="699.4" y1="0" x2="735.4" y2="0"><stop offset="0.000" stop-color="#004a9b"/><stop offset="0.333" stop-color="#006ad7"/><stop offset="0.667" stop-color="#0075eb"/><stop offset="1.000" stop-color="#006ad6"/></linearGradient>
<linearGradient id="c3" gradientUnits="userSpaceOnUse" x1="696.2" y1="0" x2="738.6" y2="0"><stop offset="0.000" stop-color="#004592"/><stop offset="0.250" stop-color="#0066ce"/><stop offset="0.500" stop-color="#0073e6"/><stop offset="0.750" stop-color="#0078f1"/><stop offset="1.000" stop-color="#006ad7"/></linearGradient>
<linearGradient id="c4" gradientUnits="userSpaceOnUse" x1="693.6" y1="0" x2="741.2" y2="0"><stop offset="0.000" stop-color="#00418a"/><stop offset="0.250" stop-color="#0065ce"/><stop offset="0.500" stop-color="#0074e8"/><stop offset="0.750" stop-color="#007af4"/><stop offset="1.000" stop-color="#006ad7"/></linearGradient>
<linearGradient id="c5" gradientUnits="userSpaceOnUse" x1="691.4" y1="0" x2="743.4" y2="0"><stop offset="0.000" stop-color="#003d83"/><stop offset="0.200" stop-color="#0060c4"/><stop offset="0.400" stop-color="#006fe0"/><stop offset="0.600" stop-color="#0078f0"/><stop offset="0.800" stop-color="#007bf6"/><stop offset="1.000" stop-color="#006ad6"/></linearGradient>
<linearGradient id="c6" gradientUnits="userSpaceOnUse" x1="689.5" y1="0" x2="745.3" y2="0"><stop offset="0.000" stop-color="#003a7d"/><stop offset="0.200" stop-color="#005fc2"/><stop offset="0.400" stop-color="#006fdf"/><stop offset="0.600" stop-color="#0078f1"/><stop offset="0.800" stop-color="#007cf7"/><stop offset="1.000" stop-color="#0069d5"/></linearGradient>
<linearGradient id="c7" gradientUnits="userSpaceOnUse" x1="687.8" y1="0" x2="747.0" y2="0"><stop offset="0.000" stop-color="#003677"/><stop offset="0.200" stop-color="#005ec0"/><stop offset="0.400" stop-color="#006fde"/><stop offset="0.600" stop-color="#0079f1"/><stop offset="0.800" stop-color="#007cf7"/><stop offset="1.000" stop-color="#0069d4"/></linearGradient>
<linearGradient id="c8" gradientUnits="userSpaceOnUse" x1="686.3" y1="0" x2="748.5" y2="0"><stop offset="0.000" stop-color="#003371"/><stop offset="0.167" stop-color="#0059b6"/><stop offset="0.333" stop-color="#0069d4"/><stop offset="0.500" stop-color="#0074e8"/><stop offset="0.667" stop-color="#007af5"/><stop offset="0.833" stop-color="#007cf7"/><stop offset="1.000" stop-color="#0068d2"/></linearGradient>
<linearGradient id="c9" gradientUnits="userSpaceOnUse" x1="685.1" y1="0" x2="749.7" y2="0"><stop offset="0.000" stop-color="#00316c"/><stop offset="0.167" stop-color="#0057b3"/><stop offset="0.333" stop-color="#0068d3"/><stop offset="0.500" stop-color="#0073e7"/><stop offset="0.667" stop-color="#007af4"/><stop offset="0.833" stop-color="#007bf6"/><stop offset="1.000" stop-color="#0067d0"/></linearGradient>
<linearGradient id="c10" gradientUnits="userSpaceOnUse" x1="683.9" y1="0" x2="750.9" y2="0"><stop offset="0.000" stop-color="#002e67"/><stop offset="0.167" stop-color="#0056b0"/><stop offset="0.333" stop-color="#0067d1"/><stop offset="0.500" stop-color="#0073e6"/><stop offset="0.667" stop-color="#007af3"/><stop offset="0.833" stop-color="#007bf6"/><stop offset="1.000" stop-color="#0066ce"/></linearGradient>
<linearGradient id="c11" gradientUnits="userSpaceOnUse" x1="683.0" y1="0" x2="751.8" y2="0"><stop offset="0.000" stop-color="#002b62"/><stop offset="0.167" stop-color="#0054ae"/><stop offset="0.333" stop-color="#0066cf"/><stop offset="0.500" stop-color="#0072e5"/><stop offset="0.667" stop-color="#0079f2"/><stop offset="0.833" stop-color="#007af4"/><stop offset="1.000" stop-color="#0065cc"/></linearGradient>
<linearGradient id="c12" gradientUnits="userSpaceOnUse" x1="682.1" y1="0" x2="752.7" y2="0"><stop offset="0.000" stop-color="#00295e"/><stop offset="0.167" stop-color="#0053ab"/><stop offset="0.333" stop-color="#0065cc"/><stop offset="0.500" stop-color="#0071e3"/><stop offset="0.667" stop-color="#0078f0"/><stop offset="0.833" stop-color="#007af3"/><stop offset="1.000" stop-color="#0064ca"/></linearGradient>
<linearGradient id="c13" gradientUnits="userSpaceOnUse" x1="681.4" y1="0" x2="753.4" y2="0"><stop offset="0.000" stop-color="#00275a"/><stop offset="0.143" stop-color="#004ea2"/><stop offset="0.286" stop-color="#005fc2"/><stop offset="0.429" stop-color="#006bd8"/><stop offset="0.571" stop-color="#0074e8"/><stop offset="0.714" stop-color="#0078f1"/><stop offset="0.857" stop-color="#0078f0"/><stop offset="1.000" stop-color="#0062c8"/></linearGradient>
<linearGradient id="c14" gradientUnits="userSpaceOnUse" x1="680.8" y1="0" x2="754.0" y2="0"><stop offset="0.000" stop-color="#002455"/><stop offset="0.143" stop-color="#004c9e"/><stop offset="0.286" stop-color="#005ebf"/><stop offset="0.429" stop-color="#006ad6"/><stop offset="0.571" stop-color="#0073e6"/><stop offset="0.714" stop-color="#0077ef"/><stop offset="0.857" stop-color="#0077ee"/><stop offset="1.000" stop-color="#0061c5"/></linearGradient>
<linearGradient id="c15" gradientUnits="userSpaceOnUse" x1="680.2" y1="0" x2="754.6" y2="0"><stop offset="0.000" stop-color="#002252"/><stop offset="0.143" stop-color="#004a9b"/><stop offset="0.286" stop-color="#005cbc"/><stop offset="0.429" stop-color="#0069d4"/><stop offset="0.571" stop-color="#0071e4"/><stop offset="0.714" stop-color="#0076ed"/><stop offset="0.857" stop-color="#0076ec"/><stop offset="1.000" stop-color="#005fc3"/></linearGradient>
<linearGradient id="c16" gradientUnits="userSpaceOnUse" x1="679.8" y1="0" x2="755.0" y2="0"><stop offset="0.000" stop-color="#00204e"/><stop offset="0.143" stop-color="#004998"/><stop offset="0.286" stop-color="#005bba"/><stop offset="0.429" stop-color="#0067d1"/><stop offset="0.571" stop-color="#0070e1"/><stop offset="0.714" stop-color="#0075ea"/><stop offset="0.857" stop-color="#0075ea"/><stop offset="1.000" stop-color="#005ec0"/></linearGradient>
<linearGradient id="c17" gradientUnits="userSpaceOnUse" x1="679.5" y1="0" x2="755.3" y2="0"><stop offset="0.000" stop-color="#001e4a"/><stop offset="0.143" stop-color="#004795"/><stop offset="0.286" stop-color="#0059b7"/><stop offset="0.429" stop-color="#0066ce"/><stop offset="0.571" stop-color="#006fdf"/><stop offset="0.714" stop-color="#0074e8"/><stop offset="0.857" stop-color="#0073e7"/><stop offset="1.000" stop-color="#005cbd"/></linearGradient>
<linearGradient id="c18" gradientUnits="userSpaceOnUse" x1="679.3" y1="0" x2="755.5" y2="0"><stop offset="0.000" stop-color="#001d47"/><stop offset="0.143" stop-color="#004592"/><stop offset="0.286" stop-color="#0057b4"/><stop offset="0.429" stop-color="#0064cb"/><stop offset="0.571" stop-color="#006ddc"/><stop offset="0.714" stop-color="#0072e5"/><stop offset="0.857" stop-color="#0072e4"/><stop offset="1.000" stop-color="#005bba"/></linearGradient>
<linearGradient id="c19" gradientUnits="userSpaceOnUse" x1="679.2" y1="0" x2="755.6" y2="0"><stop offset="0.000" stop-color="#001b43"/><stop offset="0.143" stop-color="#00448f"/><stop offset="0.286" stop-color="#0056b1"/><stop offset="0.429" stop-color="#0063c8"/><stop offset="0.571" stop-color="#006bd9"/><stop offset="0.714" stop-color="#0070e2"/><stop offset="0.857" stop-color="#0070e1"/><stop offset="1.000" stop-color="#0059b7"/></linearGradient>
<linearGradient id="c20" gradientUnits="userSpaceOnUse" x1="679.2" y1="0" x2="755.6" y2="0"><stop offset="0.000" stop-color="#001a41"/><stop offset="0.143" stop-color="#00428d"/><stop offset="0.286" stop-color="#0055af"/><stop offset="0.429" stop-color="#0061c6"/><stop offset="0.571" stop-color="#006ad7"/><stop offset="0.714" stop-color="#006fe0"/><stop offset="0.857" stop-color="#006fdf"/><stop offset="1.000" stop-color="#0058b5"/></linearGradient>
<linearGradient id="c21" gradientUnits="userSpaceOnUse" x1="679.2" y1="0" x2="755.6" y2="0"><stop offset="0.000" stop-color="#001a41"/><stop offset="0.143" stop-color="#00428d"/><stop offset="0.286" stop-color="#0055af"/><stop offset="0.429" stop-color="#0061c6"/><stop offset="0.571" stop-color="#006ad7"/><stop offset="0.714" stop-color="#006fe0"/><stop offset="0.857" stop-color="#006fdf"/><stop offset="1.000" stop-color="#0058b5"/></linearGradient>
<linearGradient id="c22" gradientUnits="userSpaceOnUse" x1="679.2" y1="0" x2="755.6" y2="0"><stop offset="0.000" stop-color="#001a41"/><stop offset="0.143" stop-color="#00428d"/><stop offset="0.286" stop-color="#0055af"/><stop offset="0.429" stop-color="#0061c6"/><stop offset="0.571" stop-color="#006ad7"/><stop offset="0.714" stop-color="#006fe0"/><stop offset="0.857" stop-color="#006fdf"/><stop offset="1.000" stop-color="#0058b5"/></linearGradient>
<linearGradient id="c23" gradientUnits="userSpaceOnUse" x1="679.2" y1="0" x2="755.6" y2="0"><stop offset="0.000" stop-color="#001a41"/><stop offset="0.143" stop-color="#00428d"/><stop offset="0.286" stop-color="#0055af"/><stop offset="0.429" stop-color="#0061c6"/><stop offset="0.571" stop-color="#006ad7"/><stop offset="0.714" stop-color="#006fe0"/><stop offset="0.857" stop-color="#006fdf"/><stop offset="1.000" stop-color="#0058b5"/></linearGradient>
<linearGradient id="c24" gradientUnits="userSpaceOnUse" x1="679.2" y1="0" x2="755.6" y2="0"><stop offset="0.000" stop-color="#001a41"/><stop offset="0.143" stop-color="#00428d"/><stop offset="0.286" stop-color="#0055af"/><stop offset="0.429" stop-color="#0061c6"/><stop offset="0.571" stop-color="#006ad7"/><stop offset="0.714" stop-color="#006fe0"/><stop offset="0.857" stop-color="#006fdf"/><stop offset="1.000" stop-color="#0058b5"/></linearGradient>
<linearGradient id="c25" gradientUnits="userSpaceOnUse" x1="679.2" y1="0" x2="755.6" y2="0"><stop offset="0.000" stop-color="#001a41"/><stop offset="0.143" stop-color="#00428d"/><stop offset="0.286" stop-color="#0055af"/><stop offset="0.429" stop-color="#0061c6"/><stop offset="0.571" stop-color="#006ad7"/><stop offset="0.714" stop-color="#006fe0"/><stop offset="0.857" stop-color="#006fdf"/><stop offset="1.000" stop-color="#0058b5"/></linearGradient>
<linearGradient id="c26" gradientUnits="userSpaceOnUse" x1="679.2" y1="0" x2="755.6" y2="0"><stop offset="0.000" stop-color="#001a41"/><stop offset="0.143" stop-color="#00428d"/><stop offset="0.286" stop-color="#0055af"/><stop offset="0.429" stop-color="#0061c6"/><stop offset="0.571" stop-color="#006ad7"/><stop offset="0.714" stop-color="#006fe0"/><stop offset="0.857" stop-color="#006fdf"/><stop offset="1.000" stop-color="#0058b5"/></linearGradient>
<linearGradient id="c27" gradientUnits="userSpaceOnUse" x1="679.2" y1="0" x2="755.6" y2="0"><stop offset="0.000" stop-color="#001a41"/><stop offset="0.143" stop-color="#00428d"/><stop offset="0.286" stop-color="#0055af"/><stop offset="0.429" stop-color="#0061c6"/><stop offset="0.571" stop-color="#006ad7"/><stop offset="0.714" stop-color="#006fe0"/><stop offset="0.857" stop-color="#006fdf"/><stop offset="1.000" stop-color="#0058b5"/></linearGradient>
<linearGradient id="c28" gradientUnits="userSpaceOnUse" x1="679.2" y1="0" x2="755.6" y2="0"><stop offset="0.000" stop-color="#001a41"/><stop offset="0.143" stop-color="#00428d"/><stop offset="0.286" stop-color="#0055af"/><stop offset="0.429" stop-color="#0061c6"/><stop offset="0.571" stop-color="#006ad7"/><stop offset="0.714" stop-color="#006fe0"/><stop offset="0.857" stop-color="#006fdf"/><stop offset="1.000" stop-color="#0058b5"/></linearGradient>
<linearGradient id="c29" gradientUnits="userSpaceOnUse" x1="679.2" y1="0" x2="755.6" y2="0"><stop offset="0.000" stop-color="#001a41"/><stop offset="0.143" stop-color="#00428d"/><stop offset="0.286" stop-color="#0055af"/><stop offset="0.429" stop-color="#0061c6"/><stop offset="0.571" stop-color="#006ad7"/><stop offset="0.714" stop-color="#006fe0"/><stop offset="0.857" stop-color="#006fdf"/><stop offset="1.000" stop-color="#0058b5"/></linearGradient>
<linearGradient id="c30" gradientUnits="userSpaceOnUse" x1="679.2" y1="0" x2="755.6" y2="0"><stop offset="0.000" stop-color="#001a41"/><stop offset="0.143" stop-color="#00428d"/><stop offset="0.286" stop-color="#0055af"/><stop offset="0.429" stop-color="#0061c6"/><stop offset="0.571" stop-color="#006ad7"/><stop offset="0.714" stop-color="#006fe0"/><stop offset="0.857" stop-color="#006fdf"/><stop offset="1.000" stop-color="#0058b5"/></linearGradient>
<linearGradient id="c31" gradientUnits="userSpaceOnUse" x1="679.2" y1="0" x2="755.6" y2="0"><stop offset="0.000" stop-color="#001a41"/><stop offset="0.143" stop-color="#00428d"/><stop offset="0.286" stop-color="#0055af"/><stop offset="0.429" stop-color="#0061c6"/><stop offset="0.571" stop-color="#006ad7"/><stop offset="0.714" stop-color="#006fe0"/><stop offset="0.857" stop-color="#006fdf"/><stop offset="1.000" stop-color="#0058b5"/></linearGradient>
<linearGradient id="c32" gradientUnits="userSpaceOnUse" x1="679.2" y1="0" x2="755.6" y2="0"><stop offset="0.000" stop-color="#001a41"/><stop offset="0.143" stop-color="#00428d"/><stop offset="0.286" stop-color="#0055af"/><stop offset="0.429" stop-color="#0061c6"/><stop offset="0.571" stop-color="#006ad7"/><stop offset="0.714" stop-color="#006fe0"/><stop offset="0.857" stop-color="#006fdf"/><stop offset="1.000" stop-color="#0058b5"/></linearGradient>
<linearGradient id="c33" gradientUnits="userSpaceOnUse" x1="679.2" y1="0" x2="755.6" y2="0"><stop offset="0.000" stop-color="#001a41"/><stop offset="0.143" stop-color="#00428d"/><stop offset="0.286" stop-color="#0055af"/><stop offset="0.429" stop-color="#0061c6"/><stop offset="0.571" stop-color="#006ad7"/><stop offset="0.714" stop-color="#006fe0"/><stop offset="0.857" stop-color="#006fdf"/><stop offset="1.000" stop-color="#0058b5"/></linearGradient>
<linearGradient id="c34" gradientUnits="userSpaceOnUse" x1="679.2" y1="0" x2="755.6" y2="0"><stop offset="0.000" stop-color="#001a41"/><stop offset="0.143" stop-color="#00428d"/><stop offset="0.286" stop-color="#0055af"/><stop offset="0.429" stop-color="#0061c6"/><stop offset="0.571" stop-color="#006ad7"/><stop offset="0.714" stop-color="#006fe0"/><stop offset="0.857" stop-color="#006fdf"/><stop offset="1.000" stop-color="#0058b5"/></linearGradient>
<linearGradient id="c35" gradientUnits="userSpaceOnUse" x1="679.2" y1="0" x2="755.6" y2="0"><stop offset="0.000" stop-color="#001a41"/><stop offset="0.143" stop-color="#00428d"/><stop offset="0.286" stop-color="#0055af"/><stop offset="0.429" stop-color="#0061c6"/><stop offset="0.571" stop-color="#006ad7"/><stop offset="0.714" stop-color="#006fe0"/><stop offset="0.857" stop-color="#006fdf"/><stop offset="1.000" stop-color="#0058b5"/></linearGradient>
<linearGradient id="c36" gradientUnits="userSpaceOnUse" x1="679.2" y1="0" x2="755.6" y2="0"><stop offset="0.000" stop-color="#001a41"/><stop offset="0.143" stop-color="#00428d"/><stop offset="0.286" stop-color="#0055af"/><stop offset="0.429" stop-color="#0061c6"/><stop offset="0.571" stop-color="#006ad7"/><stop offset="0.714" stop-color="#006fe0"/><stop offset="0.857" stop-color="#006fdf"/><stop offset="1.000" stop-color="#0058b5"/></linearGradient>
<linearGradient id="c37" gradientUnits="userSpaceOnUse" x1="679.2" y1="0" x2="755.6" y2="0"><stop offset="0.000" stop-color="#001a41"/><stop offset="0.143" stop-color="#00428d"/><stop offset="0.286" stop-color="#0055af"/><stop offset="0.429" stop-color="#0061c6"/><stop offset="0.571" stop-color="#006ad7"/><stop offset="0.714" stop-color="#006fe0"/><stop offset="0.857" stop-color="#006fdf"/><stop offset="1.000" stop-color="#0058b5"/></linearGradient>
<linearGradient id="c38" gradientUnits="userSpaceOnUse" x1="679.2" y1="0" x2="755.6" y2="0"><stop offset="0.000" stop-color="#001a41"/><stop offset="0.143" stop-color="#00428d"/><stop offset="0.286" stop-color="#0055af"/><stop offset="0.429" stop-color="#0061c6"/><stop offset="0.571" stop-color="#006ad7"/><stop offset="0.714" stop-color="#006fe0"/><stop offset="0.857" stop-color="#006fdf"/><stop offset="1.000" stop-color="#0058b5"/></linearGradient>
<linearGradient id="c39" gradientUnits="userSpaceOnUse" x1="679.2" y1="0" x2="755.6" y2="0"><stop offset="0.000" stop-color="#001a41"/><stop offset="0.143" stop-color="#00428d"/><stop offset="0.286" stop-color="#0055af"/><stop offset="0.429" stop-color="#0061c6"/><stop offset="0.571" stop-color="#006ad7"/><stop offset="0.714" stop-color="#006fe0"/><stop offset="0.857" stop-color="#006fdf"/><stop offset="1.000" stop-color="#0058b5"/></linearGradient>
<linearGradient id="c40" gradientUnits="userSpaceOnUse" x1="679.2" y1="0" x2="755.6" y2="0"><stop offset="0.000" stop-color="#001a41"/><stop offset="0.143" stop-color="#00428d"/><stop offset="0.286" stop-color="#0055af"/><stop offset="0.429" stop-color="#0061c6"/><stop offset="0.571" stop-color="#006ad7"/><stop offset="0.714" stop-color="#006fe0"/><stop offset="0.857" stop-color="#006fdf"/><stop offset="1.000" stop-color="#0058b5"/></linearGradient>
<linearGradient id="c41" gradientUnits="userSpaceOnUse" x1="679.2" y1="0" x2="755.6" y2="0"><stop offset="0.000" stop-color="#001a41"/><stop offset="0.143" stop-color="#00428d"/><stop offset="0.286" stop-color="#0055af"/><stop offset="0.429" stop-color="#0061c6"/><stop offset="0.571" stop-color="#006ad7"/><stop offset="0.714" stop-color="#006fe0"/><stop offset="0.857" stop-color="#006fdf"/><stop offset="1.000" stop-color="#0058b5"/></linearGradient>
<linearGradient id="c42" gradientUnits="userSpaceOnUse" x1="679.2" y1="0" x2="755.6" y2="0"><stop offset="0.000" stop-color="#001a41"/><stop offset="0.143" stop-color="#00428d"/><stop offset="0.286" stop-color="#0055af"/><stop offset="0.429" stop-color="#0061c6"/><stop offset="0.571" stop-color="#006ad7"/><stop offset="0.714" stop-color="#006fe0"/><stop offset="0.857" stop-color="#006fdf"/><stop offset="1.000" stop-color="#0058b5"/></linearGradient>
<linearGradient id="c43" gradientUnits="userSpaceOnUse" x1="679.2" y1="0" x2="755.6" y2="0"><stop offset="0.000" stop-color="#001a41"/><stop offset="0.143" stop-color="#00428d"/><stop offset="0.286" stop-color="#0055af"/><stop offset="0.429" stop-color="#0061c6"/><stop offset="0.571" stop-color="#006ad7"/><stop offset="0.714" stop-color="#006fe0"/><stop offset="0.857" stop-color="#006fdf"/><stop offset="1.000" stop-color="#0058b5"/></linearGradient>
<linearGradient id="c44" gradientUnits="userSpaceOnUse" x1="679.2" y1="0" x2="755.6" y2="0"><stop offset="0.000" stop-color="#001a41"/><stop offset="0.143" stop-color="#00428d"/><stop offset="0.286" stop-color="#0055af"/><stop offset="0.429" stop-color="#0061c6"/><stop offset="0.571" stop-color="#006ad7"/><stop offset="0.714" stop-color="#006fe0"/><stop offset="0.857" stop-color="#006fdf"/><stop offset="1.000" stop-color="#0058b5"/></linearGradient>
<linearGradient id="c45" gradientUnits="userSpaceOnUse" x1="679.2" y1="0" x2="755.6" y2="0"><stop offset="0.000" stop-color="#001a41"/><stop offset="0.143" stop-color="#00428d"/><stop offset="0.286" stop-color="#0055af"/><stop offset="0.429" stop-color="#0061c6"/><stop offset="0.571" stop-color="#006ad7"/><stop offset="0.714" stop-color="#006fe0"/><stop offset="0.857" stop-color="#006fdf"/><stop offset="1.000" stop-color="#0058b5"/></linearGradient>
<linearGradient id="c46" gradientUnits="userSpaceOnUse" x1="679.2" y1="0" x2="755.6" y2="0"><stop offset="0.000" stop-color="#001a41"/><stop offset="0.143" stop-color="#00428d"/><stop offset="0.286" stop-color="#0055af"/><stop offset="0.429" stop-color="#0061c6"/><stop offset="0.571" stop-color="#006ad7"/><stop offset="0.714" stop-color="#006fe0"/><stop offset="0.857" stop-color="#006fdf"/><stop offset="1.000" stop-color="#0058b5"/></linearGradient>
<linearGradient id="c47" gradientUnits="userSpaceOnUse" x1="679.2" y1="0" x2="755.6" y2="0"><stop offset="0.000" stop-color="#001a41"/><stop offset="0.143" stop-color="#00428d"/><stop offset="0.286" stop-color="#0055af"/><stop offset="0.429" stop-color="#0061c6"/><stop offset="0.571" stop-color="#006ad7"/><stop offset="0.714" stop-color="#006fe0"/><stop offset="0.857" stop-color="#006fdf"/><stop offset="1.000" stop-color="#0058b5"/></linearGradient>
<linearGradient id="c48" gradientUnits="userSpaceOnUse" x1="679.2" y1="0" x2="755.6" y2="0"><stop offset="0.000" stop-color="#001a41"/><stop offset="0.143" stop-color="#00428d"/><stop offset="0.286" stop-color="#0055af"/><stop offset="0.429" stop-color="#0061c6"/><stop offset="0.571" stop-color="#006ad7"/><stop offset="0.714" stop-color="#006fe0"/><stop offset="0.857" stop-color="#006fdf"/><stop offset="1.000" stop-color="#0058b5"/></linearGradient>
<linearGradient id="c49" gradientUnits="userSpaceOnUse" x1="679.2" y1="0" x2="755.6" y2="0"><stop offset="0.000" stop-color="#001a41"/><stop offset="0.143" stop-color="#00428d"/><stop offset="0.286" stop-color="#0055af"/><stop offset="0.429" stop-color="#0061c6"/><stop offset="0.571" stop-color="#006ad7"/><stop offset="0.714" stop-color="#006fe0"/><stop offset="0.857" stop-color="#006fdf"/><stop offset="1.000" stop-color="#0058b5"/></linearGradient>
<linearGradient id="c50" gradientUnits="userSpaceOnUse" x1="679.2" y1="0" x2="755.6" y2="0"><stop offset="0.000" stop-color="#001a41"/><stop offset="0.143" stop-color="#00428d"/><stop offset="0.286" stop-color="#0055af"/><stop offset="0.429" stop-color="#0061c6"/><stop offset="0.571" stop-color="#006ad7"/><stop offset="0.714" stop-color="#006fe0"/><stop offset="0.857" stop-color="#006fdf"/><stop offset="1.000" stop-color="#0058b5"/></linearGradient>
<linearGradient id="c51" gradientUnits="userSpaceOnUse" x1="679.2" y1="0" x2="755.6" y2="0"><stop offset="0.000" stop-color="#001a41"/><stop offset="0.143" stop-color="#00428d"/><stop offset="0.286" stop-color="#0055af"/><stop offset="0.429" stop-color="#0061c6"/><stop offset="0.571" stop-color="#006ad7"/><stop offset="0.714" stop-color="#006fe0"/><stop offset="0.857" stop-color="#006fdf"/><stop offset="1.000" stop-color="#0058b5"/></linearGradient>
<linearGradient id="c52" gradientUnits="userSpaceOnUse" x1="679.2" y1="0" x2="755.6" y2="0"><stop offset="0.000" stop-color="#001a41"/><stop offset="0.143" stop-color="#00428d"/><stop offset="0.286" stop-color="#0055af"/><stop offset="0.429" stop-color="#0061c6"/><stop offset="0.571" stop-color="#006ad7"/><stop offset="0.714" stop-color="#006fe0"/><stop offset="0.857" stop-color="#006fdf"/><stop offset="1.000" stop-color="#0058b5"/></linearGradient>
<linearGradient id="c53" gradientUnits="userSpaceOnUse" x1="679.2" y1="0" x2="755.6" y2="0"><stop offset="0.000" stop-color="#00183f"/><stop offset="0.143" stop-color="#00418a"/><stop offset="0.286" stop-color="#0053ac"/><stop offset="0.429" stop-color="#0060c4"/><stop offset="0.571" stop-color="#0069d4"/><stop offset="0.714" stop-color="#006ede"/><stop offset="0.857" stop-color="#006edd"/><stop offset="1.000" stop-color="#0057b2"/></linearGradient>
<linearGradient id="c54" gradientUnits="userSpaceOnUse" x1="679.3" y1="0" x2="755.5" y2="0"><stop offset="0.000" stop-color="#00173c"/><stop offset="0.143" stop-color="#003f87"/><stop offset="0.286" stop-color="#0052a9"/><stop offset="0.429" stop-color="#005ec0"/><stop offset="0.571" stop-color="#0067d1"/><stop offset="0.714" stop-color="#006cda"/><stop offset="0.857" stop-color="#006cd9"/><stop offset="1.000" stop-color="#0055af"/></linearGradient>
<linearGradient id="c55" gradientUnits="userSpaceOnUse" x1="679.6" y1="0" x2="755.2" y2="0"><stop offset="0.000" stop-color="#001539"/><stop offset="0.143" stop-color="#003e84"/><stop offset="0.286" stop-color="#0050a5"/><stop offset="0.429" stop-color="#005cbd"/><stop offset="0.571" stop-color="#0065cd"/><stop offset="0.714" stop-color="#006ad6"/><stop offset="0.857" stop-color="#006ad6"/><stop offset="1.000" stop-color="#0053ac"/></linearGradient>
<linearGradient id="c56" gradientUnits="userSpaceOnUse" x1="679.9" y1="0" x2="754.9" y2="0"><stop offset="0.000" stop-color="#001436"/><stop offset="0.143" stop-color="#003c81"/><stop offset="0.286" stop-color="#004ea2"/><stop offset="0.429" stop-color="#005ab9"/><stop offset="0.571" stop-color="#0063c9"/><stop offset="0.714" stop-color="#0068d3"/><stop offset="0.857" stop-color="#0068d2"/><stop offset="1.000" stop-color="#0051a8"/></linearGradient>
<linearGradient id="c57" gradientUnits="userSpaceOnUse" x1="680.3" y1="0" x2="754.5" y2="0"><stop offset="0.000" stop-color="#001233"/><stop offset="0.143" stop-color="#003a7d"/><stop offset="0.286" stop-color="#004c9e"/><stop offset="0.429" stop-color="#0058b5"/><stop offset="0.571" stop-color="#0061c5"/><stop offset="0.714" stop-color="#0066ce"/><stop offset="0.857" stop-color="#0066ce"/><stop offset="1.000" stop-color="#004fa4"/></linearGradient>
<linearGradient id="c58" gradientUnits="userSpaceOnUse" x1="680.8" y1="0" x2="754.0" y2="0"><stop offset="0.000" stop-color="#001131"/><stop offset="0.143" stop-color="#00387a"/><stop offset="0.286" stop-color="#004a9a"/><stop offset="0.429" stop-color="#0056b1"/><stop offset="0.571" stop-color="#005fc1"/><stop offset="0.714" stop-color="#0063ca"/><stop offset="0.857" stop-color="#0063c9"/><stop offset="1.000" stop-color="#004da0"/></linearGradient>
<linearGradient id="c59" gradientUnits="userSpaceOnUse" x1="681.4" y1="0" x2="753.4" y2="0"><stop offset="0.000" stop-color="#000f2e"/><stop offset="0.167" stop-color="#003a7c"/><stop offset="0.333" stop-color="#004c9f"/><stop offset="0.500" stop-color="#0058b6"/><stop offset="0.667" stop-color="#0060c3"/><stop offset="0.833" stop-color="#0061c6"/><stop offset="1.000" stop-color="#004b9c"/></linearGradient>
<linearGradient id="c60" gradientUnits="userSpaceOnUse" x1="682.2" y1="0" x2="752.6" y2="0"><stop offset="0.000" stop-color="#000e2c"/><stop offset="0.167" stop-color="#003879"/><stop offset="0.333" stop-color="#004a9a"/><stop offset="0.500" stop-color="#0056b1"/><stop offset="0.667" stop-color="#005dbe"/><stop offset="0.833" stop-color="#005ec1"/><stop offset="1.000" stop-color="#004898"/></linearGradient>
<linearGradient id="c61" gradientUnits="userSpaceOnUse" x1="683.0" y1="0" x2="751.8" y2="0"><stop offset="0.000" stop-color="#000d2a"/><stop offset="0.167" stop-color="#003575"/><stop offset="0.333" stop-color="#004796"/><stop offset="0.500" stop-color="#0053ac"/><stop offset="0.667" stop-color="#005ab9"/><stop offset="0.833" stop-color="#005cbb"/><stop offset="1.000" stop-color="#004694"/></linearGradient>
<linearGradient id="c62" gradientUnits="userSpaceOnUse" x1="684.0" y1="0" x2="750.8" y2="0"><stop offset="0.000" stop-color="#000c28"/><stop offset="0.167" stop-color="#003371"/><stop offset="0.333" stop-color="#004591"/><stop offset="0.500" stop-color="#0050a7"/><stop offset="0.667" stop-color="#0057b3"/><stop offset="0.833" stop-color="#0059b6"/><stop offset="1.000" stop-color="#00438f"/></linearGradient>
<linearGradient id="c63" gradientUnits="userSpaceOnUse" x1="685.2" y1="0" x2="749.6" y2="0"><stop offset="0.000" stop-color="#000b26"/><stop offset="0.167" stop-color="#00316d"/><stop offset="0.333" stop-color="#00428c"/><stop offset="0.500" stop-color="#004da1"/><stop offset="0.667" stop-color="#0054ad"/><stop offset="0.833" stop-color="#0055b0"/><stop offset="1.000" stop-color="#00418a"/></linearGradient>
<linearGradient id="c64" gradientUnits="userSpaceOnUse" x1="686.5" y1="0" x2="748.3" y2="0"><stop offset="0.000" stop-color="#000a24"/><stop offset="0.167" stop-color="#002f69"/><stop offset="0.333" stop-color="#003f87"/><stop offset="0.500" stop-color="#004a9b"/><stop offset="0.667" stop-color="#0051a7"/><stop offset="0.833" stop-color="#0052a9"/><stop offset="1.000" stop-color="#003e85"/></linearGradient>
<linearGradient id="c65" gradientUnits="userSpaceOnUse" x1="688.0" y1="0" x2="746.8" y2="0"><stop offset="0.000" stop-color="#000922"/><stop offset="0.200" stop-color="#00306b"/><stop offset="0.400" stop-color="#00418a"/><stop offset="0.600" stop-color="#004b9c"/><stop offset="0.800" stop-color="#004ea3"/><stop offset="1.000" stop-color="#003b7f"/></linearGradient>
<linearGradient id="c66" gradientUnits="userSpaceOnUse" x1="689.7" y1="0" x2="745.1" y2="0"><stop offset="0.000" stop-color="#000821"/><stop offset="0.200" stop-color="#002d66"/><stop offset="0.400" stop-color="#003d83"/><stop offset="0.600" stop-color="#004795"/><stop offset="0.800" stop-color="#004a9b"/><stop offset="1.000" stop-color="#003879"/></linearGradient>
<linearGradient id="c67" gradientUnits="userSpaceOnUse" x1="691.6" y1="0" x2="743.2" y2="0"><stop offset="0.000" stop-color="#000820"/><stop offset="0.200" stop-color="#002b61"/><stop offset="0.400" stop-color="#00397c"/><stop offset="0.600" stop-color="#00428c"/><stop offset="0.800" stop-color="#004592"/><stop offset="1.000" stop-color="#003473"/></linearGradient>
<linearGradient id="c68" gradientUnits="userSpaceOnUse" x1="693.9" y1="0" x2="740.9" y2="0"><stop offset="0.000" stop-color="#000720"/><stop offset="0.250" stop-color="#002c62"/><stop offset="0.500" stop-color="#003a7d"/><stop offset="0.750" stop-color="#004088"/><stop offset="1.000" stop-color="#00306b"/></linearGradient>
<linearGradient id="c69" gradientUnits="userSpaceOnUse" x1="696.5" y1="0" x2="738.3" y2="0"><stop offset="0.000" stop-color="#000720"/><stop offset="0.250" stop-color="#00285c"/><stop offset="0.500" stop-color="#003473"/><stop offset="0.750" stop-color="#003a7d"/><stop offset="1.000" stop-color="#002c64"/></linearGradient>
<linearGradient id="c70" gradientUnits="userSpaceOnUse" x1="699.8" y1="0" x2="735.0" y2="0"><stop offset="0.000" stop-color="#000821"/><stop offset="0.333" stop-color="#00285c"/><stop offset="0.667" stop-color="#00326f"/><stop offset="1.000" stop-color="#00275a"/></linearGradient>
<linearGradient id="c71" gradientUnits="userSpaceOnUse" x1="704.1" y1="0" x2="730.7" y2="0"><stop offset="0.000" stop-color="#000923"/><stop offset="0.333" stop-color="#002250"/><stop offset="0.667" stop-color="#002a5f"/><stop offset="1.000" stop-color="#00214f"/></linearGradient>
<linearGradient id="c72" gradientUnits="userSpaceOnUse" x1="711.4" y1="0" x2="723.4" y2="0"><stop offset="0.000" stop-color="#000e2b"/><stop offset="0.500" stop-color="#001b44"/><stop offset="1.000" stop-color="#00183f"/></linearGradient>
</defs>
<g clip-path="url(#capclip)" shape-rendering="crispEdges">
<rect x="676" y="358" width="82" height="2" fill="url(#c0)"/>
<rect x="676" y="360" width="82" height="2" fill="url(#c1)"/>
<rect x="676" y="362" width="82" height="2" fill="url(#c2)"/>
<rect x="676" y="364" width="82" height="2" fill="url(#c3)"/>
<rect x="676" y="366" width="82" height="2" fill="url(#c4)"/>
<rect x="676" y="368" width="82" height="2" fill="url(#c5)"/>
<rect x="676" y="370" width="82" height="2" fill="url(#c6)"/>
<rect x="676" y="372" width="82" height="2" fill="url(#c7)"/>
<rect x="676" y="374" width="82" height="2" fill="url(#c8)"/>
<rect x="676" y="376" width="82" height="2" fill="url(#c9)"/>
<rect x="676" y="378" width="82" height="2" fill="url(#c10)"/>
<rect x="676" y="380" width="82" height="2" fill="url(#c11)"/>
<rect x="676" y="382" width="82" height="2" fill="url(#c12)"/>
<rect x="676" y="384" width="82" height="2" fill="url(#c13)"/>
<rect x="676" y="386" width="82" height="2" fill="url(#c14)"/>
<rect x="676" y="388" width="82" height="2" fill="url(#c15)"/>
<rect x="676" y="390" width="82" height="2" fill="url(#c16)"/>
<rect x="676" y="392" width="82" height="2" fill="url(#c17)"/>
<rect x="676" y="394" width="82" height="2" fill="url(#c18)"/>
<rect x="676" y="396" width="82" height="2" fill="url(#c19)"/>
<rect x="676" y="398" width="82" height="2" fill="url(#c20)"/>
<rect x="676" y="400" width="82" height="2" fill="url(#c21)"/>
<rect x="676" y="402" width="82" height="2" fill="url(#c22)"/>
<rect x="676" y="404" width="82" height="2" fill="url(#c23)"/>
<rect x="676" y="406" width="82" height="2" fill="url(#c24)"/>
<rect x="676" y="408" width="82" height="2" fill="url(#c25)"/>
<rect x="676" y="410" width="82" height="2" fill="url(#c26)"/>
<rect x="676" y="412" width="82" height="2" fill="url(#c27)"/>
<rect x="676" y="414" width="82" height="2" fill="url(#c28)"/>
<rect x="676" y="416" width="82" height="2" fill="url(#c29)"/>
<rect x="676" y="418" width="82" height="2" fill="url(#c30)"/>
<rect x="676" y="420" width="82" height="2" fill="url(#c31)"/>
<rect x="676" y="422" width="82" height="2" fill="url(#c32)"/>
<rect x="676" y="424" width="82" height="2" fill="url(#c33)"/>
<rect x="676" y="426" width="82" height="2" fill="url(#c34)"/>
<rect x="676" y="428" width="82" height="2" fill="url(#c35)"/>
<rect x="676" y="430" width="82" height="2" fill="url(#c36)"/>
<rect x="676" y="432" width="82" height="2" fill="url(#c37)"/>
<rect x="676" y="434" width="82" height="2" fill="url(#c38)"/>
<rect x="676" y="436" width="82" height="2" fill="url(#c39)"/>
<rect x="676" y="438" width="82" height="2" fill="url(#c40)"/>
<rect x="676" y="440" width="82" height="2" fill="url(#c41)"/>
<rect x="676" y="442" width="82" height="2" fill="url(#c42)"/>
<rect x="676" y="444" width="82" height="2" fill="url(#c43)"/>
<rect x="676" y="446" width="82" height="2" fill="url(#c44)"/>
<rect x="676" y="448" width="82" height="2" fill="url(#c45)"/>
<rect x="676" y="450" width="82" height="2" fill="url(#c46)"/>
<rect x="676" y="452" width="82" height="2" fill="url(#c47)"/>
<rect x="676" y="454" width="82" height="2" fill="url(#c48)"/>
<rect x="676" y="456" width="82" height="2" fill="url(#c49)"/>
<rect x="676" y="458" width="82" height="2" fill="url(#c50)"/>
<rect x="676" y="460" width="82" height="2" fill="url(#c51)"/>
<rect x="676" y="462" width="82" height="2" fill="url(#c52)"/>
<rect x="676" y="464" width="82" height="2" fill="url(#c53)"/>
<rect x="676" y="466" width="82" height="2" fill="url(#c54)"/>
<rect x="676" y="468" width="82" height="2" fill="url(#c55)"/>
<rect x="676" y="470" width="82" height="2" fill="url(#c56)"/>
<rect x="676" y="472" width="82" height="2" fill="url(#c57)"/>
<rect x="676" y="474" width="82" height="2" fill="url(#c58)"/>
<rect x="676" y="476" width="82" height="2" fill="url(#c59)"/>
<rect x="676" y="478" width="82" height="2" fill="url(#c60)"/>
<rect x="676" y="480" width="82" height="2" fill="url(#c61)"/>
<rect x="676" y="482" width="82" height="2" fill="url(#c62)"/>
<rect x="676" y="484" width="82" height="2" fill="url(#c63)"/>
<rect x="676" y="486" width="82" height="2" fill="url(#c64)"/>
<rect x="676" y="488" width="82" height="2" fill="url(#c65)"/>
<rect x="676" y="490" width="82" height="2" fill="url(#c66)"/>
<rect x="676" y="492" width="82" height="2" fill="url(#c67)"/>
<rect x="676" y="494" width="82" height="2" fill="url(#c68)"/>
<rect x="676" y="496" width="82" height="2" fill="url(#c69)"/>
<rect x="676" y="498" width="82" height="2" fill="url(#c70)"/>
<rect x="676" y="500" width="82" height="2" fill="url(#c71)"/>
<rect x="676" y="502" width="82" height="2" fill="url(#c72)"/>
</g>
<path d="M699 498.3 L740.5 493.2 M733.3 479.7 L745.7 485.9 M680.4 473.4 L684.5 473.4" stroke="#e8f0ff" stroke-width="1"/>
</g>
<!-- selection -->
<rect x="555.5" y="345.5" width="217" height="161" rx="6" fill="none" stroke="#111" stroke-width="1" stroke-dasharray="3 3"/>
<!-- axes -->
<path d="M793.5 576 L793.5 596" stroke="#33dd33" stroke-width="2"/>
<path d="M762 600 L793 596" stroke="#3333cc" stroke-width="2"/>
<path d="M786 592 L792.5 595.5" stroke="#dd3333" stroke-width="2"/>

</g>
<defs>
<linearGradient id="ig" x1="0" y1="0" x2="0" y2="1"><stop offset="0" stop-color="#f4f4f4"/><stop offset="1" stop-color="#c9c9c9"/></linearGradient>
<linearGradient id="ig2" x1="0" y1="0" x2="1" y2="1"><stop offset="0" stop-color="#fdfdfd"/><stop offset="1" stop-color="#c4c4c4"/></linearGradient>
<linearGradient id="tbg" x1="0" y1="0" x2="0" y2="1"><stop offset="0" stop-color="#3c3f41"/><stop offset="1" stop-color="#2e3133"/></linearGradient>
<linearGradient id="magg" x1="0" y1="0" x2="0" y2="1"><stop offset="0" stop-color="#f6f6f6"/><stop offset="0.75" stop-color="#d8d8d8"/><stop offset="0.76" stop-color="#8a8c8d"/><stop offset="1" stop-color="#6f7172"/></linearGradient>
</defs>
<!-- logo cube -->
<g stroke="#1d1f20" stroke-width="1" stroke-linejoin="round">
<path d="M7.8 11.1 L17.1 8.3 L30.6 12.2 L16.3 17.3 Z" fill="#eeeeee"/>
<path d="M5.7 14.2 L15.6 17.9 L15.6 35.2 L6.2 30.8 Z" fill="#d9d9d9"/>
<path d="M16.9 17.9 L31.9 15.2 L32.1 31.1 L17.1 35.6 Z" fill="#d2d2d2"/>
</g>
<!-- top toolbar icons -->
<!-- new -->
<path d="M60.5 8.7 L75 8.7 L81.2 15 L81.2 32 L60.5 32 Z" fill="url(#ig)"/>
<path d="M75 8.7 L75 15 L81.2 15 Z" fill="#9d9d9d"/>
<!-- open folder -->
<path d="M94 12 L101 12 L103 14 L112 14 L112 18 L97 18 L94 22 Z" fill="#e8e8e8" stroke="#222" stroke-width="0.6"/>
<path d="M97.5 18.5 L116.5 18.5 L113 29.8 L93.6 29.8 Z" fill="url(#ig)" stroke="#222" stroke-width="0.8"/>
<!-- save -->
<g>
<path d="M128.2 9.7 L147.5 9.7 L150.2 12.5 L150.2 31.8 L128.2 31.8 Z" fill="url(#ig)"/>
<rect x="131.8" y="10.9" width="12.3" height="8.2" fill="#2a2a2a"/>
<rect x="138.8" y="12.2" width="2.6" height="4.9" fill="#f0f0f0"/>
<rect x="133" y="23" width="12" height="0.8" fill="#9a9a9a"/><rect x="133" y="26" width="12" height="0.8" fill="#9a9a9a"/>
</g>
<!-- save as -->
<g>
<path d="M164.9 8.9 L182 8.9 L184.5 11.5 L184.5 28.5 L164.9 28.5 Z" fill="#d8d8d8" stroke="#2a2a2a" stroke-width="0.6"/>
<path d="M161.3 12.2 L178.4 12.2 L180.9 14.8 L180.9 31.8 L161.3 31.8 Z" fill="url(#ig)" stroke="#2a2a2a" stroke-width="0.6"/>
<rect x="164.5" y="13.2" width="11" height="7.5" fill="#2a2a2a"/>
<rect x="170.5" y="14.3" width="2.3" height="4.5" fill="#f0f0f0"/>
<rect x="165" y="25" width="11" height="0.8" fill="#9a9a9a"/><rect x="165" y="28" width="11" height="0.8" fill="#9a9a9a"/>
</g>
<!-- upload -->
<path d="M194.9 23.2 L201.8 23.2 L201.8 26.5 L213.7 26.5 L213.7 23.2 L219 23.2 L219 29.7 L194.9 29.7 Z" fill="#e6e6e6"/>
<path d="M206.7 11.8 L212 17.5 L209.2 17.5 L209.2 24.4 L204.7 24.4 L204.7 17.5 L201.8 17.5 Z" fill="#e6e6e6"/>
<!-- download -->
<path d="M228.8 23.2 L235.8 23.2 L235.8 26.5 L247.2 26.5 L247.2 23.2 L252.9 23.2 L252.9 29.7 L228.8 29.7 Z" fill="#e6e6e6"/>
<path d="M238.6 12.2 L243.5 12.2 L243.5 19.1 L246.4 19.1 L240.9 24.4 L235.8 19.1 L238.6 19.1 Z" fill="#e6e6e6"/>
<!-- undo -->
<path d="M273.3 16.3 L277 18.5 C281 14.5 286 13.8 290 15.8 C294 18 296 22 296.8 27 C293.5 22.5 290 20.3 286 20 C283 19.8 281 20.6 279.5 21.8 L282 23.8 L274.5 23.6 Z" fill="#f2f2f2"/>
<!-- redo -->
<path d="M330.1 16.3 L326.4 18.5 C322.4 14.5 317.4 13.8 313.4 15.8 C309.4 18 307.4 22 306.6 27 C309.9 22.5 313.4 20.3 317.4 20 C320.4 19.8 322.4 20.6 323.9 21.8 L321.4 23.8 L328.9 23.6 Z" fill="#8e9091"/>
<!-- help book -->
<g>
<path d="M349.9 13.4 L363.3 8.75 L375.6 22.2 L361.6 27.4 Z" fill="#eeeeee" stroke="#151515" stroke-width="0.8"/>
<path d="M349.9 13.4 L361.6 27.4 L361.6 31.8 L349.5 17.5 Z" fill="#cfcfcf" stroke="#151515" stroke-width="0.6"/>
<path d="M361.6 27.4 L375.6 22.2 L375 26.8 L361.6 31.8 Z" fill="#f8f8f8" stroke="#151515" stroke-width="0.6"/>
<text x="361.5" y="23.5" font-family="Liberation Sans" font-weight="bold" font-size="16" fill="#111" text-anchor="middle" transform="rotate(-20 361.5 18)">?</text>
</g>
<!-- search -->
<rect x="423.5" y="9.5" width="182" height="24" rx="4" fill="#ffffff" stroke="#d8d8d8" stroke-width="1"/>
<text x="431.7" y="28.6" font-family="Liberation Sans" font-size="14" fill="#7d7d7d" textLength="144" lengthAdjust="spacingAndGlyphs">Search sketches, users..</text>
<circle cx="590.5" cy="18.5" r="4.6" fill="none" stroke="#111" stroke-width="2.4"/>
<path d="M594 22 L599 27" stroke="#111" stroke-width="3" stroke-linecap="round"/>
<!-- title panel -->
<path d="M606.5 46 L616 46 L616 55 Z" fill="#77797b"/>
<rect x="615.5" y="0" width="231" height="55.5" fill="#f3f6f8"/>
<rect x="615.5" y="55" width="231" height="1" fill="#b9bcbe"/>
<rect x="846" y="1" width="1" height="55" fill="#cfd2d4"/>
<g font-family="Liberation Sans" fill="#383838"><text x="697" y="18" font-size="11.2" textLength="83" lengthAdjust="spacing">&lt;New Sketch&gt;</text><text x="786" y="17.8" font-size="12.5">*</text><text x="797.7" y="18.5" font-size="10.5" textLength="12.5" lengthAdjust="spacingAndGlyphs">by</text><text x="813.5" y="18" font-size="11.2" textLength="20" lengthAdjust="spacing">You</text></g>

<!-- left sidebar icons -->
<!-- shapes -->
<g stroke="#1a1a1a" stroke-width="0.8">
<circle cx="27.2" cy="68.6" r="5.8" fill="url(#ig2)"/>
<path d="M14 60.9 L9.1 73.2 L17 75 L19 66 Z" fill="#e0e0e0"/>
<path d="M15.9 69 L15.9 78.5 C18 80.5 24 80.5 26.3 78.5 L26.3 69 Z" fill="url(#ig)"/>
<ellipse cx="21.1" cy="69" rx="5.2" ry="1.8" fill="#f5f5f5"/>
</g>
<!-- blocks -->
<g stroke="#1a1a1a" stroke-width="0.7" stroke-linejoin="round">
<path d="M10.9 100.5 L13.4 97.7 L22.6 97.7 L20.1 100.5 Z" fill="#f6f6f6"/>
<path d="M20.1 100.5 L22.6 97.7 L22.6 106.8 L20.1 109.3 Z" fill="#bdbdbd"/>
<rect x="10.9" y="100.5" width="9.2" height="8.8" fill="url(#ig)"/>
<path d="M20.1 109.3 L22.6 106.8 L31.6 106.8 L29.1 109.3 Z" fill="#f6f6f6"/>
<path d="M29.1 109.3 L31.6 106.8 L31.6 116.3 L29.1 118.6 Z" fill="#bdbdbd"/>
<rect x="10.9" y="109.3" width="9.2" height="9.3" fill="url(#ig)"/>
<rect x="20.1" y="109.3" width="9" height="9.3" fill="url(#ig)"/>
</g>
<!-- extrude -->
<g>
<path d="M9.7 169 L20.5 165.5 L31.3 169 L31.3 174.5 L20.5 178 L9.7 174.5 Z" fill="#d8d8d8"/>
<path d="M9.7 169 L20.5 165.5 L31.3 169 L20.5 172.5 Z" fill="#f4f4f4"/>
<path d="M20.7 153.2 L26.1 159.2 L23.1 159.2 L23.1 168.4 L18.1 168.4 L18.1 159.2 L14.9 159.2 Z" fill="#f0f0f0" stroke="#2a2a2a" stroke-width="0.6"/>
</g>
<!-- eraser -->
<path d="M10.4 200.2 L27.6 190.5 L33.6 196.5 L16 213.5 L8.2 207.7 Z" fill="#e6e6e6"/>
<path d="M27.6 190.5 L33.6 196.5 L28.5 201 L23 195 Z" fill="#9a9a9a"/>
<!-- dashed select -->
<rect x="7.5" y="227" width="20.5" height="20.5" fill="none" stroke="#dcdcdc" stroke-width="1.6" stroke-dasharray="3 2"/>
<path d="M30.5 247 L30.5 255 M26.5 251 L34.5 251" stroke="#dcdcdc" stroke-width="1.3"/>
<!-- brush -->
<path d="M31.2 268 L21.5 279.5" stroke="#eeeeee" stroke-width="4.2" stroke-linecap="round"/>
<path d="M17.5 278.5 L22.5 283 L20 285.5 C17 288.5 12.5 289 9.2 288.8 C11.5 287 13 284 15 281 Z" fill="#e2e2e2"/>
<!-- eyedropper -->
<ellipse cx="27" cy="307.5" rx="3.6" ry="4.8" transform="rotate(45 27 307.5)" fill="#eeeeee"/>
<path d="M19.8 309.5 L26.2 315.9" stroke="#eeeeee" stroke-width="3.2"/>
<path d="M22 314 L13 323.5" stroke="#e6e6e6" stroke-width="3.2" stroke-linecap="round"/>
<!-- refresh -->
<g fill="none" stroke="#e8e8e8" stroke-width="3.8">
<path d="M12 348.5 C12.8 343.5 16.5 340.2 21 340.2 C24.3 340.2 26.8 341.7 28.3 344"/>
<path d="M29.8 352.3 C29 357.3 25.3 360.6 20.8 360.6 C17.5 360.6 15 359.1 13.5 356.8"/>
</g>
<path d="M24 346.5 L32.5 349 L32.5 339 Z" fill="#e8e8e8"/>
<path d="M17.8 354.3 L9.3 351.8 L9.3 361.8 Z" fill="#e8e8e8"/>
<!-- cube -->
<path d="M11.4 600 L15 596 L30.7 593.6 L27.1 600 Z" fill="#5a5d5f" stroke="#222" stroke-width="0.6"/>
<path d="M27.1 600 L30.7 593.6 L30.7 608.5 L27.1 614.3 Z" fill="#4a4d4f" stroke="#222" stroke-width="0.6"/>
<rect x="11.4" y="600" width="15.7" height="14.3" fill="url(#ig)"/>
<!-- magnet button -->
<rect x="4.5" y="625.7" width="33.4" height="32.2" rx="4" fill="#2b2e30" stroke="#1e2021" stroke-width="1"/>
<path d="M9.3 654.3 L9.3 642 C9.3 635 14.5 630.7 21.1 630.7 C27.7 630.7 32.9 635 32.9 642 L32.9 654.3 L26.6 654.3 L26.6 642 C26.6 638.5 24.2 637 21.1 637 C18 637 15.6 638.5 15.6 642 L15.6 654.3 Z" fill="url(#magg)"/>
<!-- grid button -->
<rect x="4.5" y="662.9" width="33.4" height="32.1" rx="4" fill="#2b2e30" stroke="#1e2021" stroke-width="1"/>
<g stroke="#f0f0f0" stroke-width="1.5">
<path d="M15 667 L15 690.7 M21.1 667 L21.1 690.7 M27.1 667 L27.1 690.7 M8.6 672.9 L33.6 672.9 M8.6 679.1 L33.6 679.1 M8.6 685 L33.6 685"/>
</g>
<!-- sun -->
<circle cx="21" cy="716" r="5.2" fill="#eeeeee"/>
<g stroke="#d0d0d0" stroke-width="1.4">
<path d="M21 705 L21 708.5 M21 723.5 L21 727 M10 716 L13.5 716 M28.5 716 L32 716 M13.2 708.2 L15.7 710.7 M26.3 721.3 L28.8 723.8 M28.8 708.2 L26.3 710.7 M15.7 721.3 L13.2 723.8 M16.8 705.9 L18.1 709.1 M23.9 722.9 L25.2 726.1 M25.2 705.9 L23.9 709.1 M18.1 722.9 L16.8 726.1 M10.9 711.8 L14.1 713.1 M27.9 718.9 L31.1 720.2 M31.1 711.8 L27.9 713.1 M14.1 718.9 L10.9 720.2"/>
</g>
<!-- club -->
<g fill="#e4e4e4">
<circle cx="20.5" cy="747" r="4.3"/>
<circle cx="14.8" cy="755" r="4.3"/>
<circle cx="26.3" cy="755" r="4.3" fill="#3a3d3f" stroke="#e4e4e4" stroke-width="1.6"/>
<path d="M19.5 750 L21.5 750 L22.5 761 L25 763.8 L16 763.8 L18.5 761 Z"/>
</g>

<!-- shape toolbar -->
<rect x="46" y="53" width="231" height="1.2" fill="#3a3c3e"/>
<rect x="46" y="54" width="231" height="34" fill="#939597" fill-opacity="0.82"/>
<rect x="46" y="87.5" width="231" height="1" fill="#8a8d8e" fill-opacity="0.8"/>
<g stroke="#1a1a1a" stroke-width="1.4">
<path d="M62 64.5 L62 79.5 C63 82 75 82 76.5 79.5 L76.5 64.5" fill="url(#ig)"/>
<ellipse cx="69.2" cy="64.5" rx="7.2" ry="2.8" fill="#f6f6f6"/>
<circle cx="103" cy="72" r="9.6" fill="url(#ig2)"/>
<path d="M129 65 L133.5 61.5 L145.5 64.5 L145 78.5 L141 82 L129 79 Z" fill="url(#ig)"/>
<path d="M129 65 L133.5 61.5 L145.5 64.5 L141 68 Z" fill="#fafafa"/>
<path d="M141 68 L141 82" fill="none"/>
<path d="M171 60.8 L163 79.5 C166 83 176 83 179 79.5 Z" fill="url(#ig)"/>
<ellipse cx="204.7" cy="71.6" rx="11" ry="6.4" fill="url(#ig)"/>
<ellipse cx="204.7" cy="71.6" rx="5" ry="1.8" fill="#9a9a9a"/>
</g>
<text x="230" y="81.3" font-family="Liberation Sans" font-weight="bold" font-size="34" fill="#f2f2f2" stroke="#1a1a1a" stroke-width="2" paint-order="stroke" textLength="19" lengthAdjust="spacingAndGlyphs">a</text>
<path d="M264 58 L270 58 M265.5 58 L265.5 62.5 M268.5 58 L268.5 62.5 M263 62.5 L271 62.5 M267 62.5 L267 67" stroke="#2a2a2a" stroke-width="1.2"/>

<!-- selection toolbar -->
<linearGradient id="stb" x1="0" y1="0" x2="0" y2="1"><stop offset="0" stop-color="#393c3e"/><stop offset="1" stop-color="#232628"/></linearGradient><rect x="560.5" y="512" width="281" height="63.5" rx="4" fill="url(#stb)" fill-opacity="0.96"/>
<rect x="616" y="516.5" width="27" height="27" rx="3" fill="#232527" stroke="#1a1c1d" stroke-width="1"/>
<path d="M621.5 538.5 L622.5 532.5 L634.5 520.5 L639 525 L627 537 Z M632 523 L636.5 527.5" fill="none" stroke="#e8e8e8" stroke-width="1.3" stroke-linejoin="round"/>
<text x="651.8" y="537.2" font-family="Liberation Sans" font-size="20.5" fill="#e6e6e6" textLength="19.6" lengthAdjust="spacingAndGlyphs">2x</text>
<path d="M690.5 525.5 A6.8 6.8 0 1 1 687.3 531.5" fill="none" stroke="#e6e6e6" stroke-width="2.6"/>
<path d="M686 521.5 L693.5 522.5 L688.5 528.5 Z" fill="#e6e6e6"/>
<path d="M724 522 L724 539 L716.5 539 Z" fill="#e0e0e0"/>
<path d="M727 522 L727 539 L734.5 539 Z" fill="#bdbdbd"/>
<g fill="#d8d8d8">
<rect x="750" y="523.5" width="17" height="2.2"/>
<rect x="755" y="520.5" width="7" height="2.5"/>
<path d="M751.5 527 L765.5 527 L765 540 L752 540 Z"/>
</g>
<path d="M755.5 529 L755.5 538 M758.5 529 L758.5 538 M761.5 529 L761.5 538" stroke="#2f3234" stroke-width="1.2"/>
<path d="M825 527 L833 535 M833 527 L825 535" stroke="#e8e8e8" stroke-width="2.6" stroke-linecap="round"/>
<text x="653.5" y="562.6" font-family="Liberation Sans" font-size="12.5" fill="#dcdcdc" textLength="45.8" lengthAdjust="spacingAndGlyphs">smooth</text>
<path d="M721.7 550.7 L708.7 557.7 L721.7 564.7 Z" fill="#9a9c9d"/>
<text x="726.4" y="562.8" font-family="Liberation Sans" font-size="12" fill="#dcdcdc" textLength="7.4" lengthAdjust="spacingAndGlyphs">2</text>
<path d="M737.6 550.7 L751.6 557.7 L737.6 564.7 Z" fill="#9a9c9d"/>

<!-- nav widget -->
<path d="M792.7 652.3 A53 53 0 0 1 845.7 705.3 L845.7 754 Q845.7 758.3 841.4 758.3 L792.7 758.3 A53 53 0 0 1 792.7 652.3 Z" fill="#8f9294" stroke="#5b5e60" stroke-width="1.2"/>
<g fill="url(#ig)">
<rect x="784.8" y="658.8" width="12.8" height="12.8"/>
<path d="M787.8 671.6 L794.6 671.6 L797.6 679.3 L784.8 679.3 Z" fill="#cfcfcf"/>
<rect x="748.8" y="698.1" width="12" height="12.8"/>
<path d="M760.8 701.5 L768.5 698.1 L768.5 710.9 L760.8 707.5 Z" fill="#d4d4d4"/>
<rect x="822.3" y="698.1" width="12" height="12.8"/>
<path d="M822.3 701.5 L813.8 698.1 L813.8 710.9 L822.3 707.5 Z" fill="#d4d4d4"/>
<path d="M784.8 730.6 L797.6 730.6 L794.6 737.4 L787.8 737.4 Z" fill="#e6e6e6"/>
<rect x="784.8" y="737.4" width="12.8" height="13.6"/>
<rect x="783.8" y="689.6" width="16.3" height="30.7" rx="4"/>
</g>
<path d="M788 700.5 L796 700.5 M792 696.5 L792 704.5" stroke="#333" stroke-width="2.2"/>
<path d="M788 713.5 L796 713.5" stroke="#444" stroke-width="2.2"/>
<path d="M824 745 L831.7 738.3 L839.4 745 L837.4 745 L837.4 752 L833.6 752 L833.6 747.5 L829.8 747.5 L829.8 752 L826 752 L826 745 Z" fill="#f4f4f4"/>

</svg>
</body></html>
